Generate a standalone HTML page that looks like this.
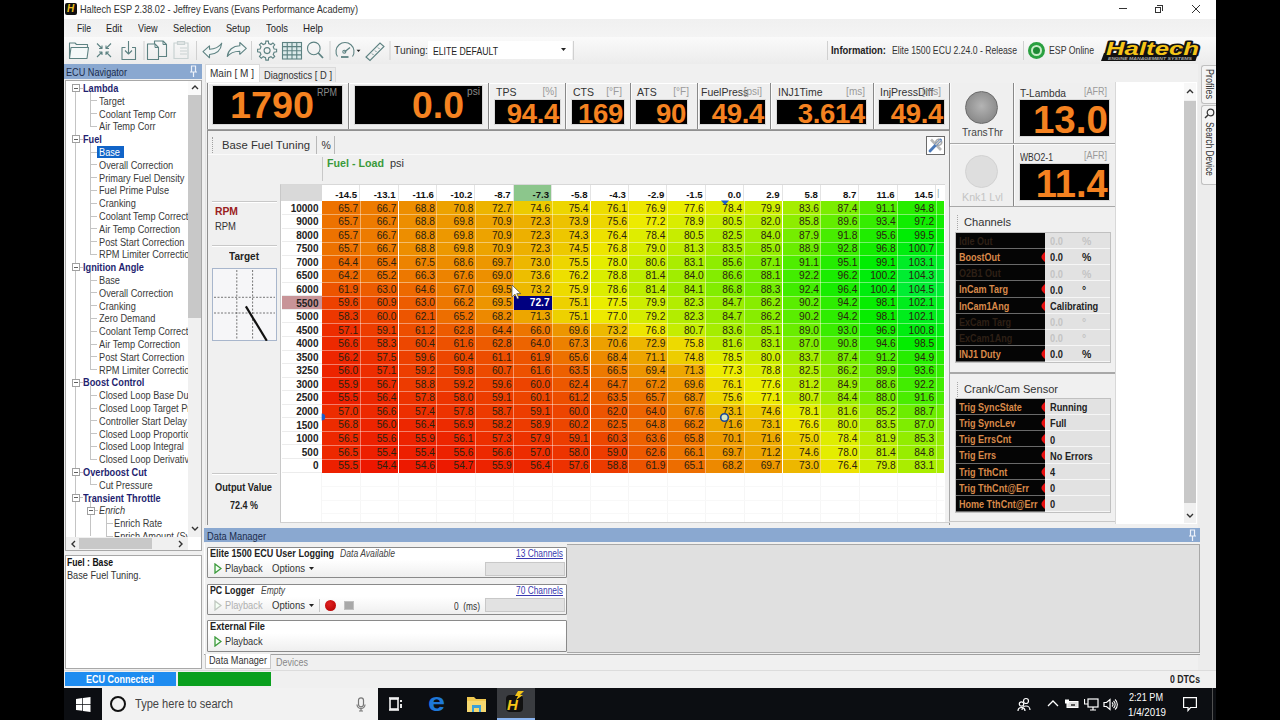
<!DOCTYPE html><html><head><meta charset="utf-8">
<style>
*{margin:0;padding:0;box-sizing:border-box}
html,body{width:1280px;height:720px;overflow:hidden;background:#000;font-family:"Liberation Sans",sans-serif;color:#222}
.a{position:absolute}
.t{position:absolute;white-space:nowrap;line-height:1}
.sep{position:absolute;width:1px;background:#c8c8c8}
</style></head><body>
<!-- window -->
<div class="a" style="left:64px;top:0;width:1152px;height:688px;background:#f0f0f0"></div>
<!-- title bar -->
<div class="a" style="left:64px;top:0;width:1152px;height:19px;background:#fff"></div>
<div class="a" style="left:65px;top:3px;width:12px;height:12px;background:#111;border-radius:2px"></div>
<div class="t" style="left:67px;top:4px;font-size:10px;font-weight:bold;font-style:italic;color:#f0c020">H</div>
<div class="t" style="left: 80px; top: 4px; font-size: 11px; color: rgb(51, 51, 51); display: inline-block; white-space: nowrap; transform: scaleX(0.8338); transform-origin: left center;">Haltech ESP 2.38.02 - Jeffrey Evans (Evans Performance Academy)</div>
<div class="a" style="left:1119px;top:8px;width:8px;height:1px;background:#333"></div>
<div class="a" style="left:1155px;top:7px;width:6px;height:6px;border:1px solid #333"></div>
<div class="a" style="left:1157px;top:5px;width:6px;height:6px;border-top:1px solid #333;border-right:1px solid #333"></div>
<svg class="a" style="left:1192px;top:5px" width="8" height="8"><path d="M0 0L8 8M8 0L0 8" stroke="#333" stroke-width="1"></path></svg>
<!-- menu bar -->
<div class="a" style="left:64px;top:19px;width:1152px;height:18px;background:linear-gradient(#f0f0f0,#f4f4f4)"></div>
<div class="t" style="left: 77px; top: 23px; font-size: 11px; color: rgb(34, 34, 34); display: inline-block; white-space: nowrap; transform: scaleX(0.7894); transform-origin: left center;">File</div>
<div class="t" style="left: 106px; top: 23px; font-size: 11px; color: rgb(34, 34, 34); display: inline-block; white-space: nowrap; transform: scaleX(0.8435); transform-origin: left center;">Edit</div>
<div class="t" style="left: 138px; top: 23px; font-size: 11px; color: rgb(34, 34, 34); display: inline-block; white-space: nowrap; transform: scaleX(0.8243); transform-origin: left center;">View</div>
<div class="t" style="left: 173px; top: 23px; font-size: 11px; color: rgb(34, 34, 34); display: inline-block; white-space: nowrap; transform: scaleX(0.8395); transform-origin: left center;">Selection</div>
<div class="t" style="left: 226px; top: 23px; font-size: 11px; color: rgb(34, 34, 34); display: inline-block; white-space: nowrap; transform: scaleX(0.8348); transform-origin: left center;">Setup</div>
<div class="t" style="left: 266px; top: 23px; font-size: 11px; color: rgb(34, 34, 34); display: inline-block; white-space: nowrap; transform: scaleX(0.8564); transform-origin: left center;">Tools</div>
<div class="t" style="left: 303px; top: 23px; font-size: 11px; color: rgb(34, 34, 34); display: inline-block; white-space: nowrap; transform: scaleX(0.884); transform-origin: left center;">Help</div>
<!-- toolbar -->
<div class="a" style="left:64px;top:37px;width:1152px;height:27px;background:linear-gradient(#fafafa,#ececec)"></div>
<svg class="a" style="left:64px;top:37px" width="520" height="27" viewBox="64 37 520 27">
<g fill="none" stroke="#5d8282" stroke-width="1.1" stroke-linejoin="round">
<path d="M69.5 58.5V43h5.5l1.5 1.5H87.5V47.5"></path>
<path d="M69.5 58.5L71 47.5H88.5L87 58.5Z" fill="#f4f8f8"></path>
<path d="M97 43.5L102 48.5M102 45.5V48.5H99M111 43.5L106 48.5M106 45.5V48.5H109M97 57L102 52M102 55V52H99M111 57L106 52M106 55V52H109"></path>
<path d="M125.5 47.5H122V59.5H135.5V47.5H132M128.5 41V53.5M125 50.5L128.5 54L132 50.5"></path>
<path d="M154.5 44V41H163L166.5 44.5V56.5H158.5"></path>
<path d="M147.5 59.5V44H155L158.5 47.5V59.5Z"></path>
<path d="M155 44V47.5H158.5M163 41V44.5H166.5" stroke-width="1"></path>
</g>
<g fill="none" stroke="#c9d2d2" stroke-width="1.2">
<path d="M174 58.5V43H188V58.5ZM177.5 41.5H184.5V44.5H177.5ZM180 48H187M180 51H187M180 54H187"></path>
</g>
<g fill="#f2f6f6" stroke="#5d8282" stroke-width="1.1" stroke-linejoin="round">
<path d="M203 51.7L209.5 45.8V49.2C215 49 219 47 221.7 43.2C221 50 216.5 54 209.5 54.5V57.8Z"></path>
<path d="M246.3 48.3L239.8 42.5V45.8C233 46 228 50 227.3 56.5C230 53 234 51.3 239.8 51.2V54.3Z"></path>
</g>
<g fill="none" stroke="#5d8282" stroke-width="1.1">
<path d="M274.13 49.03 L276.61 49.32 L276.61 51.88 L274.13 52.17 L273.18 54.46 L274.73 56.42 L272.92 58.23 L270.96 56.68 L268.67 57.63 L268.38 60.11 L265.82 60.11 L265.53 57.63 L263.24 56.68 L261.28 58.23 L259.47 56.42 L261.02 54.46 L260.07 52.17 L257.59 51.88 L257.59 49.32 L260.07 49.03 L261.02 46.74 L259.47 44.78 L261.28 42.97 L263.24 44.52 L265.53 43.57 L265.82 41.09 L268.38 41.09 L268.67 43.57 L270.96 44.52 L272.92 42.97 L274.73 44.78 L273.18 46.74Z"></path>
<circle cx="267.1" cy="50.6" r="3"></circle>
<rect x="282.5" y="42.5" width="19" height="16.5" fill="#dceaea"></rect>
<path d="M287.25 42.5V59M292 42.5V59M296.75 42.5V59M282.5 46.6H301.5M282.5 50.75H301.5M282.5 54.9H301.5"></path>
<circle cx="313.8" cy="48.4" r="6.3"></circle>
<path d="M318.3 53L323 58" stroke-width="1.8"></path>
<path d="M337.5 56.5A9 9 0 1 1 352.5 56.5"></path>
<path d="M344.5 52L350 47.5" stroke-width="1.3"></path>
<circle cx="344.3" cy="51.8" r="1.5"></circle>
<path d="M341 57H348.5" stroke-width="1.8"></path>
<path d="M366 57L370 60.5L384 46.5L380 43Z"></path>
<path d="M372 53.5L373.5 55M375 50.5L376.5 52M378 47.5L379.5 49" stroke-width="0.9"></path>
</g>
<path d="M356.5 49.8h4l-2 2.2z" fill="#222"></path>
<g fill="#d0d0d0"><rect x="143.5" y="41" width="1" height="19"></rect><rect x="196" y="41" width="1" height="19"></rect><rect x="251" y="41" width="1" height="19"></rect><rect x="329.5" y="41" width="1" height="19"></rect><rect x="389.5" y="41" width="1" height="19"></rect><rect x="573" y="41" width="1" height="19"></rect></g>
</svg>
<div class="t" style="left: 394px; top: 45px; font-size: 11px; color: rgb(51, 51, 51); display: inline-block; white-space: nowrap; transform: scaleX(0.9367); transform-origin: left center;">Tuning:</div>
<div class="a" style="left:428px;top:41px;width:144px;height:18px;background:#fff"></div>
<div class="t" style="left: 433px; top: 46.5px; font-size: 10px; color: rgb(34, 34, 34); display: inline-block; white-space: nowrap; transform: scaleX(0.8685); transform-origin: left center;">ELITE DEFAULT</div>
<svg class="a" style="left:561px;top:48px" width="6" height="4"><path d="M0 0h5l-2.5 3z" fill="#222"></path></svg>
<div class="a" style="left:827px;top:41px;width:1px;height:19px;background:#d0d0d0"></div>
<div class="t" style="left: 831px; top: 45px; font-size: 11px; font-weight: bold; color: rgb(34, 34, 34); display: inline-block; white-space: nowrap; transform: scaleX(0.8571); transform-origin: left center;">Information:</div>
<div class="t" style="left: 892px; top: 45px; font-size: 11px; color: rgb(51, 51, 51); display: inline-block; white-space: nowrap; transform: scaleX(0.7862); transform-origin: left center;">Elite 1500 ECU 2.24.0 - Release</div>
<div class="a" style="left:1023px;top:41px;width:1px;height:19px;background:#d0d0d0"></div>
<div class="a" style="left:1028px;top:41.5px;width:17px;height:17px;border-radius:50%;background:#2aa040"></div>
<div class="a" style="left:1031px;top:44.5px;width:11px;height:11px;border-radius:50%;background:#1f8a35;border:2px solid #c8ecc8"></div>
<div class="t" style="left: 1049px; top: 45px; font-size: 11px; color: rgb(51, 51, 51); display: inline-block; white-space: nowrap; transform: scaleX(0.794); transform-origin: left center;">ESP Online</div>
<svg class="a" style="left:1099px;top:39px" width="106" height="24" viewBox="0 0 106 24">
<path d="M5 14H99L96.5 22H2Z" fill="#111"></path>
<text x="7" y="16.3" font-family="Liberation Sans" font-weight="bold" font-style="italic" font-size="17.5" fill="#f5c518" stroke="#111" stroke-width="3.2" stroke-linejoin="round" paint-order="stroke" textLength="93" lengthAdjust="spacingAndGlyphs">Haltech</text>
<text x="9" y="20.8" font-family="Liberation Sans" font-weight="bold" font-style="italic" font-size="4.2" fill="#aaa" textLength="84" lengthAdjust="spacingAndGlyphs">ENGINE MANAGEMENT SYSTEMS</text>
</svg>
<!--TOOLBAR-->
<div class="a" style="left:64px;top:64px;width:138px;height:15px;background:#8aa8d0"></div>
<div class="t" style="left: 66px; top: 67px; font-size: 11px; color: rgb(28, 44, 76); display: inline-block; white-space: nowrap; transform: scaleX(0.8315); transform-origin: left center;">ECU Navigator</div>
<svg class="a" style="left:189px;top:65px" width="9" height="13"><path d="M2.5 1H6.5V7H2.5Z M1 7H8 M4.5 7V12" fill="none" stroke="#eef2fa" stroke-width="1.2"></path></svg>
<div class="a" style="left:65px;top:80px;width:137px;height:471px;background:#fff;border:1px solid #a8a8a8"></div>
<div class="a" style="left:66px;top:81px;width:122px;height:456px;overflow:hidden">
<div class="a" style="left:9px;top:10.6px;width:1px;height:445.4px;background:#c4c4c4"></div>
<div class="a" style="left:24px;top:10.6px;width:1px;height:34.4px;background:#c4c4c4"></div>
<div class="a" style="left:24px;top:61.8px;width:1px;height:111.2px;background:#c4c4c4"></div>
<div class="a" style="left:24px;top:189.8px;width:1px;height:98.4px;background:#c4c4c4"></div>
<div class="a" style="left:24px;top:305.0px;width:1px;height:72.8px;background:#c4c4c4"></div>
<div class="a" style="left:24px;top:394.6px;width:1px;height:8.8px;background:#c4c4c4"></div>
<div class="a" style="left:24px;top:420.2px;width:1px;height:34.4px;background:#c4c4c4"></div>
<div class="a" style="left:40px;top:433.0px;width:1px;height:35.6px;background:#c4c4c4"></div>
<div class="t" style="left:17.4px;top:3.0px;font-size:10px;color:#1f1f70;font-weight:bold;transform:scaleX(0.92);transform-origin:left center">Lambda</div>
<div class="a" style="left:6px;top:3.1px;width:8px;height:8px;border:1px solid #a0a0a0;background:#fff"></div><div class="a" style="left:8px;top:6.6px;width:4px;height:1px;background:#606060"></div>
<div class="a" style="left:14px;top:6.6px;width:3px;height:1px;background:#c4c4c4"></div>
<div class="a" style="left:24px;top:19.4px;width:7px;height:1px;background:#c4c4c4"></div>
<div class="t" style="left:32.7px;top:15.8px;font-size:10px;color:#3a3a3a;transform:scaleX(0.92);transform-origin:left center">Target</div>
<div class="a" style="left:24px;top:32.2px;width:7px;height:1px;background:#c4c4c4"></div>
<div class="t" style="left:32.7px;top:28.6px;font-size:10px;color:#3a3a3a;transform:scaleX(0.92);transform-origin:left center">Coolant Temp Corr</div>
<div class="a" style="left:24px;top:45.0px;width:7px;height:1px;background:#c4c4c4"></div>
<div class="t" style="left:32.7px;top:41.4px;font-size:10px;color:#3a3a3a;transform:scaleX(0.92);transform-origin:left center">Air Temp Corr</div>
<div class="t" style="left:17.4px;top:54.2px;font-size:10px;color:#1f1f70;font-weight:bold;transform:scaleX(0.92);transform-origin:left center">Fuel</div>
<div class="a" style="left:6px;top:54.3px;width:8px;height:8px;border:1px solid #a0a0a0;background:#fff"></div><div class="a" style="left:8px;top:57.8px;width:4px;height:1px;background:#606060"></div>
<div class="a" style="left:14px;top:57.8px;width:3px;height:1px;background:#c4c4c4"></div>
<div class="a" style="left:24px;top:70.6px;width:7px;height:1px;background:#c4c4c4"></div>
<div class="a" style="left:30.6px;top:64.6px;width:27px;height:12px;background:#1164c8"></div>
<div class="t" style="left:32.7px;top:67.0px;font-size:10px;color:#fff;transform:scaleX(0.92);transform-origin:left center">Base</div>
<div class="a" style="left:24px;top:83.4px;width:7px;height:1px;background:#c4c4c4"></div>
<div class="t" style="left:32.7px;top:79.8px;font-size:10px;color:#3a3a3a;transform:scaleX(0.92);transform-origin:left center">Overall Correction</div>
<div class="a" style="left:24px;top:96.2px;width:7px;height:1px;background:#c4c4c4"></div>
<div class="t" style="left:32.7px;top:92.6px;font-size:10px;color:#3a3a3a;transform:scaleX(0.92);transform-origin:left center">Primary Fuel Density</div>
<div class="a" style="left:24px;top:109.0px;width:7px;height:1px;background:#c4c4c4"></div>
<div class="t" style="left:32.7px;top:105.4px;font-size:10px;color:#3a3a3a;transform:scaleX(0.92);transform-origin:left center">Fuel Prime Pulse</div>
<div class="a" style="left:24px;top:121.8px;width:7px;height:1px;background:#c4c4c4"></div>
<div class="t" style="left:32.7px;top:118.2px;font-size:10px;color:#3a3a3a;transform:scaleX(0.92);transform-origin:left center">Cranking</div>
<div class="a" style="left:24px;top:134.6px;width:7px;height:1px;background:#c4c4c4"></div>
<div class="t" style="left:32.7px;top:131.0px;font-size:10px;color:#3a3a3a;transform:scaleX(0.92);transform-origin:left center">Coolant Temp Correction</div>
<div class="a" style="left:24px;top:147.4px;width:7px;height:1px;background:#c4c4c4"></div>
<div class="t" style="left:32.7px;top:143.8px;font-size:10px;color:#3a3a3a;transform:scaleX(0.92);transform-origin:left center">Air Temp Correction</div>
<div class="a" style="left:24px;top:160.2px;width:7px;height:1px;background:#c4c4c4"></div>
<div class="t" style="left:32.7px;top:156.6px;font-size:10px;color:#3a3a3a;transform:scaleX(0.92);transform-origin:left center">Post Start Correction</div>
<div class="a" style="left:24px;top:173.0px;width:7px;height:1px;background:#c4c4c4"></div>
<div class="t" style="left:32.7px;top:169.4px;font-size:10px;color:#3a3a3a;transform:scaleX(0.92);transform-origin:left center">RPM Limiter Correction</div>
<div class="t" style="left:17.4px;top:182.2px;font-size:10px;color:#1f1f70;font-weight:bold;transform:scaleX(0.92);transform-origin:left center">Ignition Angle</div>
<div class="a" style="left:6px;top:182.3px;width:8px;height:8px;border:1px solid #a0a0a0;background:#fff"></div><div class="a" style="left:8px;top:185.8px;width:4px;height:1px;background:#606060"></div>
<div class="a" style="left:14px;top:185.8px;width:3px;height:1px;background:#c4c4c4"></div>
<div class="a" style="left:24px;top:198.6px;width:7px;height:1px;background:#c4c4c4"></div>
<div class="t" style="left:32.7px;top:195.0px;font-size:10px;color:#3a3a3a;transform:scaleX(0.92);transform-origin:left center">Base</div>
<div class="a" style="left:24px;top:211.4px;width:7px;height:1px;background:#c4c4c4"></div>
<div class="t" style="left:32.7px;top:207.8px;font-size:10px;color:#3a3a3a;transform:scaleX(0.92);transform-origin:left center">Overall Correction</div>
<div class="a" style="left:24px;top:224.2px;width:7px;height:1px;background:#c4c4c4"></div>
<div class="t" style="left:32.7px;top:220.6px;font-size:10px;color:#3a3a3a;transform:scaleX(0.92);transform-origin:left center">Cranking</div>
<div class="a" style="left:24px;top:237.0px;width:7px;height:1px;background:#c4c4c4"></div>
<div class="t" style="left:32.7px;top:233.4px;font-size:10px;color:#3a3a3a;transform:scaleX(0.92);transform-origin:left center">Zero Demand</div>
<div class="a" style="left:24px;top:249.8px;width:7px;height:1px;background:#c4c4c4"></div>
<div class="t" style="left:32.7px;top:246.2px;font-size:10px;color:#3a3a3a;transform:scaleX(0.92);transform-origin:left center">Coolant Temp Correction</div>
<div class="a" style="left:24px;top:262.6px;width:7px;height:1px;background:#c4c4c4"></div>
<div class="t" style="left:32.7px;top:259.0px;font-size:10px;color:#3a3a3a;transform:scaleX(0.92);transform-origin:left center">Air Temp Correction</div>
<div class="a" style="left:24px;top:275.4px;width:7px;height:1px;background:#c4c4c4"></div>
<div class="t" style="left:32.7px;top:271.8px;font-size:10px;color:#3a3a3a;transform:scaleX(0.92);transform-origin:left center">Post Start Correction</div>
<div class="a" style="left:24px;top:288.2px;width:7px;height:1px;background:#c4c4c4"></div>
<div class="t" style="left:32.7px;top:284.6px;font-size:10px;color:#3a3a3a;transform:scaleX(0.92);transform-origin:left center">RPM Limiter Correction</div>
<div class="t" style="left:17.4px;top:297.4px;font-size:10px;color:#1f1f70;font-weight:bold;transform:scaleX(0.92);transform-origin:left center">Boost Control</div>
<div class="a" style="left:6px;top:297.5px;width:8px;height:8px;border:1px solid #a0a0a0;background:#fff"></div><div class="a" style="left:8px;top:301.0px;width:4px;height:1px;background:#606060"></div>
<div class="a" style="left:14px;top:301.0px;width:3px;height:1px;background:#c4c4c4"></div>
<div class="a" style="left:24px;top:313.8px;width:7px;height:1px;background:#c4c4c4"></div>
<div class="t" style="left:32.7px;top:310.2px;font-size:10px;color:#3a3a3a;transform:scaleX(0.92);transform-origin:left center">Closed Loop Base Duty</div>
<div class="a" style="left:24px;top:326.6px;width:7px;height:1px;background:#c4c4c4"></div>
<div class="t" style="left:32.7px;top:323.0px;font-size:10px;color:#3a3a3a;transform:scaleX(0.92);transform-origin:left center">Closed Loop Target Pressure</div>
<div class="a" style="left:24px;top:339.4px;width:7px;height:1px;background:#c4c4c4"></div>
<div class="t" style="left:32.7px;top:335.8px;font-size:10px;color:#3a3a3a;transform:scaleX(0.92);transform-origin:left center">Controller Start Delay</div>
<div class="a" style="left:24px;top:352.2px;width:7px;height:1px;background:#c4c4c4"></div>
<div class="t" style="left:32.7px;top:348.6px;font-size:10px;color:#3a3a3a;transform:scaleX(0.92);transform-origin:left center">Closed Loop Proportional</div>
<div class="a" style="left:24px;top:365.0px;width:7px;height:1px;background:#c4c4c4"></div>
<div class="t" style="left:32.7px;top:361.4px;font-size:10px;color:#3a3a3a;transform:scaleX(0.92);transform-origin:left center">Closed Loop Integral</div>
<div class="a" style="left:24px;top:377.8px;width:7px;height:1px;background:#c4c4c4"></div>
<div class="t" style="left:32.7px;top:374.2px;font-size:10px;color:#3a3a3a;transform:scaleX(0.92);transform-origin:left center">Closed Loop Derivative</div>
<div class="t" style="left:17.4px;top:387.0px;font-size:10px;color:#1f1f70;font-weight:bold;transform:scaleX(0.92);transform-origin:left center">Overboost Cut</div>
<div class="a" style="left:6px;top:387.1px;width:8px;height:8px;border:1px solid #a0a0a0;background:#fff"></div><div class="a" style="left:8px;top:390.6px;width:4px;height:1px;background:#606060"></div>
<div class="a" style="left:14px;top:390.6px;width:3px;height:1px;background:#c4c4c4"></div>
<div class="a" style="left:24px;top:403.4px;width:7px;height:1px;background:#c4c4c4"></div>
<div class="t" style="left:32.7px;top:399.8px;font-size:10px;color:#3a3a3a;transform:scaleX(0.92);transform-origin:left center">Cut Pressure</div>
<div class="t" style="left:17.4px;top:412.6px;font-size:10px;color:#1f1f70;font-weight:bold;transform:scaleX(0.92);transform-origin:left center">Transient Throttle</div>
<div class="a" style="left:6px;top:412.7px;width:8px;height:8px;border:1px solid #a0a0a0;background:#fff"></div><div class="a" style="left:8px;top:416.2px;width:4px;height:1px;background:#606060"></div>
<div class="a" style="left:14px;top:416.2px;width:3px;height:1px;background:#c4c4c4"></div>
<div class="t" style="left:32.7px;top:425.4px;font-size:10px;color:#3a3a3a;font-style:italic;transform:scaleX(0.92);transform-origin:left center">Enrich</div>
<div class="a" style="left:21px;top:425.5px;width:8px;height:8px;border:1px solid #a0a0a0;background:#fff"></div><div class="a" style="left:23px;top:429.0px;width:4px;height:1px;background:#606060"></div>
<div class="a" style="left:29px;top:429.0px;width:3px;height:1px;background:#c4c4c4"></div>
<div class="a" style="left:40px;top:441.8px;width:7px;height:1px;background:#c4c4c4"></div>
<div class="t" style="left:48.0px;top:438.2px;font-size:10px;color:#3a3a3a;transform:scaleX(0.92);transform-origin:left center">Enrich Rate</div>
<div class="a" style="left:40px;top:454.6px;width:7px;height:1px;background:#c4c4c4"></div>
<div class="t" style="left:48.0px;top:451.0px;font-size:10px;color:#3a3a3a;transform:scaleX(0.92);transform-origin:left center">Enrich Amount (Sync)</div>
</div>
<div class="a" style="left:188px;top:81px;width:13px;height:456px;background:#f0f0f0"></div>
<div class="a" style="left:188px;top:81px;width:13px;height:14px;background:#fafafa"></div>
<svg class="a" style="left:191px;top:84px" width="8" height="6"><path d="M1 5L4 2L7 5" fill="none" stroke="#333" stroke-width="1.4"></path></svg>
<div class="a" style="left:188px;top:95px;width:13px;height:223px;background:#c8c8c8"></div>
<svg class="a" style="left:191px;top:526px" width="8" height="6"><path d="M1 1L4 4L7 1" fill="none" stroke="#333" stroke-width="1.4"></path></svg>
<div class="a" style="left:66px;top:537px;width:122px;height:13px;background:#f0f0f0"></div>
<div class="a" style="left:79px;top:538px;width:73px;height:11px;background:#c8c8c8"></div>
<svg class="a" style="left:70px;top:540px" width="6" height="8"><path d="M5 1L2 4L5 7" fill="none" stroke="#333" stroke-width="1.4"></path></svg>
<svg class="a" style="left:178px;top:540px" width="6" height="8"><path d="M1 1L4 4L1 7" fill="none" stroke="#333" stroke-width="1.4"></path></svg>
<div class="a" style="left:65px;top:555px;width:137px;height:114px;background:#fff;border:1px solid #a8a8a8"></div>
<div class="t" style="left: 67px; top: 558px; font-size: 10px; font-weight: bold; color: rgb(17, 17, 17); display: inline-block; white-space: nowrap; transform: scaleX(0.8621); transform-origin: left center;">Fuel : Base</div>
<div class="t" style="left: 67px; top: 570.5px; font-size: 10px; color: rgb(51, 51, 51); display: inline-block; white-space: nowrap; transform: scaleX(0.918); transform-origin: left center;">Base Fuel Tuning.</div>

<div class="a" style="left:205px;top:64px;width:55px;height:19px;background:#fff;border:1px solid #dadada;border-bottom:none"></div>
<div class="t" style="left: 210px; top: 68px; font-size: 10.5px; color: rgb(51, 51, 51); display: inline-block; white-space: nowrap; transform: scaleX(0.9546); transform-origin: left center;">Main [ M ]</div>
<div class="a" style="left:260px;top:67px;width:76px;height:15px;background:#ebebeb;border:1px solid #dadada;border-bottom:none;border-left:none"></div>
<div class="t" style="left: 264px; top: 69.5px; font-size: 10.5px; color: rgb(51, 51, 51); display: inline-block; white-space: nowrap; transform: scaleX(0.8894); transform-origin: left center;">Diagnostics [ D ]</div>
<div class="a" style="left:205px;top:82px;width:995px;height:443px;background:#f0f0f0;border-left:1px solid #e4e4e4"></div>
<div class="a" style="left:207px;top:83px;width:742px;height:47px;background:#efefef;border-top:1px solid #fff"></div>
<div class="a" style="left:207px;top:83px;width:1px;height:47px;background:#888888"></div><div class="a" style="left:208px;top:83px;width:1px;height:47px;background:#fbfbfb"></div>
<div class="a" style="left:348px;top:83px;width:1px;height:47px;background:#888888"></div><div class="a" style="left:349px;top:83px;width:1px;height:47px;background:#fbfbfb"></div>
<div class="a" style="left:488px;top:83px;width:1px;height:47px;background:#888888"></div><div class="a" style="left:489px;top:83px;width:1px;height:47px;background:#fbfbfb"></div>
<div class="a" style="left:565px;top:83px;width:1px;height:47px;background:#888888"></div><div class="a" style="left:566px;top:83px;width:1px;height:47px;background:#fbfbfb"></div>
<div class="a" style="left:630px;top:83px;width:1px;height:47px;background:#888888"></div><div class="a" style="left:631px;top:83px;width:1px;height:47px;background:#fbfbfb"></div>
<div class="a" style="left:697px;top:83px;width:1px;height:47px;background:#888888"></div><div class="a" style="left:698px;top:83px;width:1px;height:47px;background:#fbfbfb"></div>
<div class="a" style="left:770px;top:83px;width:1px;height:47px;background:#888888"></div><div class="a" style="left:771px;top:83px;width:1px;height:47px;background:#fbfbfb"></div>
<div class="a" style="left:873px;top:83px;width:1px;height:47px;background:#888888"></div><div class="a" style="left:874px;top:83px;width:1px;height:47px;background:#fbfbfb"></div>
<div class="a" style="left:949px;top:83px;width:1px;height:47px;background:#888888"></div><div class="a" style="left:950px;top:83px;width:1px;height:47px;background:#fbfbfb"></div>
<div class="a" style="left:207px;top:129px;width:743px;height:1px;background:#a0a0a0"></div>
<div class="a" style="left:212px;top:85px;width:131px;height:40px;background:#d8d8d8"></div>
<div class="a" style="left:213px;top:86px;width:129px;height:38px;background:#000"></div>
<div class="t" style="left: 230px; top: 87px; font-size: 37.7px; font-weight: bold; color: rgb(245, 130, 32); display: inline-block; white-space: nowrap; transform: scaleX(1.0019); transform-origin: left center;">1790</div>
<div class="t" style="left: 317px; top: 87px; font-size: 10.5px; color: rgb(138, 138, 138); display: inline-block; white-space: nowrap; transform: scaleX(0.8568); transform-origin: left center;">RPM</div>
<div class="a" style="left:354px;top:85px;width:129px;height:40px;background:#d8d8d8"></div>
<div class="a" style="left:355px;top:86px;width:127px;height:38px;background:#000"></div>
<div class="t" style="left: 412px; top: 87px; font-size: 37.7px; font-weight: bold; color: rgb(245, 130, 32); display: inline-block; white-space: nowrap; transform: scaleX(0.9922); transform-origin: left center;">0.0</div>
<div class="t" style="left: 466.5px; top: 86px; font-size: 10.5px; color: rgb(138, 138, 138); display: inline-block; white-space: nowrap; transform: scaleX(0.9674); transform-origin: left center;">psi</div>
<div class="a" style="left:494px;top:99px;width:67px;height:26px;background:#d8d8d8"></div>
<div class="a" style="left:495px;top:100px;width:65px;height:24px;background:#000"></div>
<div class="t" style="left:496px;top:87px;font-size:10.5px;color:#333">TPS</div>
<div class="t" style="right:723px;top:87px;font-size:10px;color:#9a9a9a">[%]</div>
<div class="t" style="right:721px;top:99.5px;font-size:27.5px;font-weight:bold;color:#f58220;letter-spacing:-0.3px">94.4</div>
<div class="a" style="left:571px;top:99px;width:54px;height:26px;background:#d8d8d8"></div>
<div class="a" style="left:572px;top:100px;width:52px;height:24px;background:#000"></div>
<div class="t" style="left:573px;top:87px;font-size:10.5px;color:#333">CTS</div>
<div class="t" style="right:658px;top:87px;font-size:10px;color:#9a9a9a">[°F]</div>
<div class="t" style="right:657px;top:99.5px;font-size:27.5px;font-weight:bold;color:#f58220;letter-spacing:-0.3px">169</div>
<div class="a" style="left:635px;top:99px;width:53px;height:26px;background:#d8d8d8"></div>
<div class="a" style="left:636px;top:100px;width:51px;height:24px;background:#000"></div>
<div class="t" style="left:637px;top:87px;font-size:10.5px;color:#333">ATS</div>
<div class="t" style="right:591px;top:87px;font-size:10px;color:#9a9a9a">[°F]</div>
<div class="t" style="right:594px;top:99.5px;font-size:27.5px;font-weight:bold;color:#f58220;letter-spacing:-0.3px">90</div>
<div class="a" style="left:699px;top:99px;width:67px;height:26px;background:#d8d8d8"></div>
<div class="a" style="left:700px;top:100px;width:65px;height:24px;background:#000"></div>
<div class="t" style="left:701px;top:87px;font-size:10.5px;color:#333">FuelPress</div>
<div class="t" style="right:518px;top:87px;font-size:10px;color:#9a9a9a">[psi]</div>
<div class="t" style="right:516px;top:99.5px;font-size:27.5px;font-weight:bold;color:#f58220;letter-spacing:-0.3px">49.4</div>
<div class="a" style="left:776px;top:99px;width:91px;height:26px;background:#d8d8d8"></div>
<div class="a" style="left:777px;top:100px;width:89px;height:24px;background:#000"></div>
<div class="t" style="left:778px;top:87px;font-size:10.5px;color:#333">INJ1Time</div>
<div class="t" style="right:415px;top:87px;font-size:10px;color:#9a9a9a">[ms]</div>
<div class="t" style="right:415px;top:99.5px;font-size:27.5px;font-weight:bold;color:#f58220;letter-spacing:-0.3px">3.614</div>
<div class="a" style="left:878px;top:99px;width:67px;height:26px;background:#d8d8d8"></div>
<div class="a" style="left:879px;top:100px;width:65px;height:24px;background:#000"></div>
<div class="t" style="left:880px;top:87px;font-size:10.5px;color:#333">InjPressDiff</div>
<div class="t" style="right:339px;top:87px;font-size:10px;color:#9a9a9a">[ms]</div>
<div class="t" style="right:337px;top:99.5px;font-size:27.5px;font-weight:bold;color:#f58220;letter-spacing:-0.3px">49.4</div>
<div class="a" style="left:950px;top:83px;width:165px;height:123px;background:#efefef"></div>
<div class="a" style="left:949px;top:83px;width:1px;height:123px;background:#888888"></div><div class="a" style="left:950px;top:83px;width:1px;height:123px;background:#fbfbfb"></div>
<div class="a" style="left:1013px;top:83px;width:1px;height:123px;background:#888888"></div><div class="a" style="left:1014px;top:83px;width:1px;height:123px;background:#fbfbfb"></div>
<div class="a" style="left:1115px;top:83px;width:1px;height:123px;background:#888888"></div><div class="a" style="left:1116px;top:83px;width:1px;height:123px;background:#fbfbfb"></div>
<div class="a" style="left:950px;top:143px;width:165px;height:1px;background:#a8a8a8"></div><div class="a" style="left:950px;top:144px;width:165px;height:1px;background:#fbfbfb"></div>
<div class="a" style="left:950px;top:206px;width:165px;height:1px;background:#a8a8a8"></div><div class="a" style="left:950px;top:207px;width:165px;height:1px;background:#fbfbfb"></div>
<div class="a" style="left:965.3px;top:90.5px;width:33px;height:33px;border-radius:50%;background:radial-gradient(circle at 50% 45%,#b4b4b4,#8c8c8c 70%,#7a7a7a);border:1px solid #6a6a6a"></div>
<div class="t" style="left: 962px; top: 126.5px; font-size: 10.5px; color: rgb(68, 68, 68); display: inline-block; white-space: nowrap; transform: scaleX(0.9715); transform-origin: left center;">TransThr</div>
<div class="a" style="left:965.3px;top:155px;width:33px;height:33px;border-radius:50%;background:#dedede;border:1px solid #d2d2d2"></div>
<div class="t" style="left: 962px; top: 191.5px; font-size: 10.5px; color: rgb(196, 196, 196); display: inline-block; white-space: nowrap; transform: scaleX(1.0178); transform-origin: left center;">Knk1 Lvl</div>
<div class="a" style="left:1019px;top:99px;width:91px;height:38px;background:#d8d8d8"></div>
<div class="a" style="left:1020px;top:100px;width:89px;height:36px;background:#000"></div>
<div class="t" style="left: 1020px; top: 87.5px; font-size: 10.5px; color: rgb(51, 51, 51); display: inline-block; white-space: nowrap; transform: scaleX(0.9729); transform-origin: left center;">T-Lambda</div>
<div class="t" style="left: 1084px; top: 87px; font-size: 10px; color: rgb(154, 154, 154); display: inline-block; white-space: nowrap; transform: scaleX(0.8998); transform-origin: left center;">[AFR]</div>
<div class="t" style="right: 172px; top: 99.5px; font-size: 39px; font-weight: bold; color: rgb(245, 130, 32); transform-origin: right center; display: inline-block; white-space: nowrap; transform: scaleX(0.9881);">13.0</div>
<div class="a" style="left:1019px;top:163px;width:91px;height:38px;background:#d8d8d8"></div>
<div class="a" style="left:1020px;top:164px;width:89px;height:36px;background:#000"></div>
<div class="t" style="left: 1020px; top: 151.5px; font-size: 10.5px; color: rgb(51, 51, 51); display: inline-block; white-space: nowrap; transform: scaleX(0.8196); transform-origin: left center;">WBO2-1</div>
<div class="t" style="left: 1084px; top: 151px; font-size: 10px; color: rgb(154, 154, 154); display: inline-block; white-space: nowrap; transform: scaleX(0.8998); transform-origin: left center;">[AFR]</div>
<div class="t" style="right: 172px; top: 163.5px; font-size: 39px; font-weight: bold; color: rgb(245, 130, 32); transform-origin: right center; display: inline-block; white-space: nowrap; transform: scaleX(0.9761);">11.4</div>

<div class="a" style="left:207px;top:130px;width:743px;height:395px;background:#f0f0f0;border:1px solid #909090;border-bottom:none"></div>
<div class="a" style="left:208px;top:154px;width:740px;height:1px;background:#fafafa"></div>
<div class="a" style="left:212px;top:137px;width:1px;height:16px;border-left:1px dotted #a0a0a0"></div>
<div class="t" style="left: 222px; top: 140px; font-size: 11px; color: rgb(51, 51, 51); display: inline-block; white-space: nowrap; transform: scaleX(1.0277); transform-origin: left center;">Base Fuel Tuning</div>
<div class="a" style="left:316px;top:136px;width:1px;height:18px;background:#b8b8b8"></div>
<div class="t" style="left:321.5px;top:140px;font-size:10.5px;color:#333">%</div>
<div class="a" style="left:334px;top:136px;width:1px;height:18px;background:#b8b8b8"></div>
<div class="a" style="left:926px;top:135.5px;width:19px;height:19px;background:#fff;border:1px solid #6a6a6a"></div>
<svg class="a" style="left:927px;top:136.5px" width="17" height="17"><path d="M4 2.5L14 13" stroke="#b8b8b8" stroke-width="2.6"></path><path d="M11 2L14 5M13 2.5A3 3 0 1 0 14.5 4" fill="none" stroke="#aaa" stroke-width="1.6"></path><path d="M13.5 3L3 14" stroke="#4a78b8" stroke-width="2.8" stroke-linecap="round"></path><path d="M13.5 3L8.5 8" stroke="#c0c0c0" stroke-width="2"></path></svg>
<div class="a" style="left:212px;top:201px;width:65px;height:1px;background:#c8c8c8"></div><div class="a" style="left:212px;top:202px;width:65px;height:1px;background:#fff"></div>
<div class="t" style="left: 214.5px; top: 205.5px; font-size: 10.5px; font-weight: bold; color: rgb(154, 32, 32); display: inline-block; white-space: nowrap; transform: scaleX(0.9853); transform-origin: left center;">RPM</div>
<div class="t" style="left: 214.5px; top: 220.5px; font-size: 10.5px; color: rgb(51, 51, 51); display: inline-block; white-space: nowrap; transform: scaleX(0.8996); transform-origin: left center;">RPM</div>
<div class="a" style="left:212px;top:245px;width:65px;height:1px;background:#c8c8c8"></div><div class="a" style="left:212px;top:246px;width:65px;height:1px;background:#fff"></div>
<div class="t" style="left: 229px; top: 251px; font-size: 10.5px; font-weight: bold; color: rgb(34, 34, 34); display: inline-block; white-space: nowrap; transform: scaleX(0.9581); transform-origin: left center;">Target</div>
<div class="a" style="left:212px;top:268px;width:65px;height:73px;background:#f6f6f8;border:1.5px solid #a8b6cc"></div>
<svg class="a" style="left:212px;top:268px" width="65" height="73"><path d="M24.8 2V71M40.6 2V71M2 29.3H63M2 45H63" stroke="#555" stroke-width="0.8" stroke-dasharray="2 1.5"></path><path d="M33.9 38.4L54.8 72.8" stroke="#111" stroke-width="2.2"></path></svg>
<div class="a" style="left:212px;top:473px;width:65px;height:1px;background:#c8c8c8"></div><div class="a" style="left:212px;top:474px;width:65px;height:1px;background:#fff"></div>
<div class="t" style="left: 215px; top: 482px; font-size: 10.5px; font-weight: bold; color: rgb(34, 34, 34); display: inline-block; white-space: nowrap; transform: scaleX(0.8801); transform-origin: left center;">Output Value</div>
<div class="t" style="left: 230px; top: 500px; font-size: 10.5px; font-weight: bold; color: rgb(34, 34, 34); display: inline-block; white-space: nowrap; transform: scaleX(0.8562); transform-origin: left center;">72.4 %</div>
<div class="a" style="left:322px;top:157px;width:1px;height:24px;background:#c8c8c8"></div>
<div class="t" style="left: 326.5px; top: 158px; font-size: 11px; font-weight: bold; color: rgb(58, 154, 58); display: inline-block; white-space: nowrap; transform: scaleX(0.9715); transform-origin: left center;">Fuel - Load</div>
<div class="t" style="left: 390px; top: 158px; font-size: 11px; color: rgb(51, 51, 51); display: inline-block; white-space: nowrap; transform: scaleX(0.9956); transform-origin: left center;">psi</div>
<div class="a" style="left:280px;top:184px;width:665px;height:338px;background:#fff;border-left:1px solid #c8c8c8;border-top:1px solid #d8d8d8"></div>
<div class="a" style="left:281px;top:185px;width:40.7px;height:16.4px;background:#d9d9d9"></div>
<div class="a" style="left:359.10px;top:185px;width:1px;height:16.4px;background:#e4e4e4"></div>
<div class="t" style="right:922.90px;top:189.5px;font-size:9.6px;font-weight:bold;color:#111">-14.5</div>
<div class="a" style="left:397.50px;top:185px;width:1px;height:16.4px;background:#e4e4e4"></div>
<div class="t" style="right:884.50px;top:189.5px;font-size:9.6px;font-weight:bold;color:#111">-13.1</div>
<div class="a" style="left:435.90px;top:185px;width:1px;height:16.4px;background:#e4e4e4"></div>
<div class="t" style="right:846.10px;top:189.5px;font-size:9.6px;font-weight:bold;color:#111">-11.6</div>
<div class="a" style="left:474.30px;top:185px;width:1px;height:16.4px;background:#e4e4e4"></div>
<div class="t" style="right:807.70px;top:189.5px;font-size:9.6px;font-weight:bold;color:#111">-10.2</div>
<div class="a" style="left:512.70px;top:185px;width:1px;height:16.4px;background:#e4e4e4"></div>
<div class="t" style="right:769.30px;top:189.5px;font-size:9.6px;font-weight:bold;color:#111">-8.7</div>
<div class="a" style="left:513.70px;top:185px;width:38.40px;height:16.4px;background:#8cc68c"></div>
<div class="a" style="left:551.10px;top:185px;width:1px;height:16.4px;background:#e4e4e4"></div>
<div class="t" style="right:730.90px;top:189.5px;font-size:9.6px;font-weight:bold;color:#111">-7.3</div>
<div class="a" style="left:589.50px;top:185px;width:1px;height:16.4px;background:#e4e4e4"></div>
<div class="t" style="right:692.50px;top:189.5px;font-size:9.6px;font-weight:bold;color:#111">-5.8</div>
<div class="a" style="left:627.90px;top:185px;width:1px;height:16.4px;background:#e4e4e4"></div>
<div class="t" style="right:654.10px;top:189.5px;font-size:9.6px;font-weight:bold;color:#111">-4.3</div>
<div class="a" style="left:666.30px;top:185px;width:1px;height:16.4px;background:#e4e4e4"></div>
<div class="t" style="right:615.70px;top:189.5px;font-size:9.6px;font-weight:bold;color:#111">-2.9</div>
<div class="a" style="left:704.70px;top:185px;width:1px;height:16.4px;background:#e4e4e4"></div>
<div class="t" style="right:577.30px;top:189.5px;font-size:9.6px;font-weight:bold;color:#111">-1.5</div>
<div class="a" style="left:743.10px;top:185px;width:1px;height:16.4px;background:#e4e4e4"></div>
<div class="t" style="right:538.90px;top:189.5px;font-size:9.6px;font-weight:bold;color:#111">0.0</div>
<div class="a" style="left:781.50px;top:185px;width:1px;height:16.4px;background:#e4e4e4"></div>
<div class="t" style="right:500.50px;top:189.5px;font-size:9.6px;font-weight:bold;color:#111">2.9</div>
<div class="a" style="left:819.90px;top:185px;width:1px;height:16.4px;background:#e4e4e4"></div>
<div class="t" style="right:462.10px;top:189.5px;font-size:9.6px;font-weight:bold;color:#111">5.8</div>
<div class="a" style="left:858.30px;top:185px;width:1px;height:16.4px;background:#e4e4e4"></div>
<div class="t" style="right:423.70px;top:189.5px;font-size:9.6px;font-weight:bold;color:#111">8.7</div>
<div class="a" style="left:896.70px;top:185px;width:1px;height:16.4px;background:#e4e4e4"></div>
<div class="t" style="right:385.30px;top:189.5px;font-size:9.6px;font-weight:bold;color:#111">11.6</div>
<div class="a" style="left:935.10px;top:185px;width:1px;height:16.4px;background:#e4e4e4"></div>
<div class="t" style="right:346.90px;top:189.5px;font-size:9.6px;font-weight:bold;color:#111">14.5</div>
<div class="t" style="left:937px;top:189px;font-size:9px;color:#8aa">|</div>
<div class="a" style="left:282px;top:213.96px;width:39.7px;height:1px;background:#ececec"></div>
<div class="t" style="right:961.50px;top:203.60px;font-size:10px;font-weight:bold;color:#222">10000</div>
<div class="a" style="left:321.70px;top:201.40px;width:38.40px;height:13.56px;background:#ed7200"></div>
<div class="a" style="left:360.10px;top:201.40px;width:38.40px;height:13.56px;background:#ed7b00"></div>
<div class="a" style="left:398.50px;top:201.40px;width:38.40px;height:13.56px;background:#ed8e00"></div>
<div class="a" style="left:436.90px;top:201.40px;width:38.40px;height:13.56px;background:#eda200"></div>
<div class="a" style="left:475.30px;top:201.40px;width:38.40px;height:13.56px;background:#edb400"></div>
<div class="a" style="left:513.70px;top:201.40px;width:38.40px;height:13.56px;background:#edcb00"></div>
<div class="a" style="left:552.10px;top:201.40px;width:38.40px;height:13.56px;background:#edd500"></div>
<div class="a" style="left:590.50px;top:201.40px;width:38.40px;height:13.56px;background:#eddd00"></div>
<div class="a" style="left:628.90px;top:201.40px;width:38.40px;height:13.56px;background:#ede700"></div>
<div class="a" style="left:667.30px;top:201.40px;width:38.40px;height:13.56px;background:#e9ed00"></div>
<div class="a" style="left:705.70px;top:201.40px;width:38.40px;height:13.56px;background:#dfed00"></div>
<div class="a" style="left:744.10px;top:201.40px;width:38.40px;height:13.56px;background:#cded00"></div>
<div class="a" style="left:782.50px;top:201.40px;width:38.40px;height:13.56px;background:#a5ed00"></div>
<div class="a" style="left:820.90px;top:201.40px;width:38.40px;height:13.56px;background:#7bed00"></div>
<div class="a" style="left:859.30px;top:201.40px;width:38.40px;height:13.56px;background:#4fed00"></div>
<div class="a" style="left:897.70px;top:201.40px;width:38.40px;height:13.56px;background:#27ed00"></div>
<div class="a" style="left:936.10px;top:201.40px;width:7.90px;height:13.56px;background:#27ed00"></div>
<div class="a" style="left:282px;top:227.52px;width:39.7px;height:1px;background:#ececec"></div>
<div class="t" style="right:961.50px;top:217.16px;font-size:10px;font-weight:bold;color:#222">9000</div>
<div class="a" style="left:321.70px;top:214.96px;width:38.40px;height:13.56px;background:#ed7200"></div>
<div class="a" style="left:360.10px;top:214.96px;width:38.40px;height:13.56px;background:#ed7b00"></div>
<div class="a" style="left:398.50px;top:214.96px;width:38.40px;height:13.56px;background:#ed8e00"></div>
<div class="a" style="left:436.90px;top:214.96px;width:38.40px;height:13.56px;background:#ed9800"></div>
<div class="a" style="left:475.30px;top:214.96px;width:38.40px;height:13.56px;background:#eda300"></div>
<div class="a" style="left:513.70px;top:214.96px;width:38.40px;height:13.56px;background:#edb000"></div>
<div class="a" style="left:552.10px;top:214.96px;width:38.40px;height:13.56px;background:#edc200"></div>
<div class="a" style="left:590.50px;top:214.96px;width:38.40px;height:13.56px;background:#edd700"></div>
<div class="a" style="left:628.90px;top:214.96px;width:38.40px;height:13.56px;background:#edeb00"></div>
<div class="a" style="left:667.30px;top:214.96px;width:38.40px;height:13.56px;background:#d9ed00"></div>
<div class="a" style="left:705.70px;top:214.96px;width:38.40px;height:13.56px;background:#c7ed00"></div>
<div class="a" style="left:744.10px;top:214.96px;width:38.40px;height:13.56px;background:#b6ed00"></div>
<div class="a" style="left:782.50px;top:214.96px;width:38.40px;height:13.56px;background:#8ded00"></div>
<div class="a" style="left:820.90px;top:214.96px;width:38.40px;height:13.56px;background:#62ed00"></div>
<div class="a" style="left:859.30px;top:214.96px;width:38.40px;height:13.56px;background:#35ed00"></div>
<div class="a" style="left:897.70px;top:214.96px;width:38.40px;height:13.56px;background:#10ed00"></div>
<div class="a" style="left:936.10px;top:214.96px;width:7.90px;height:13.56px;background:#10ed00"></div>
<div class="a" style="left:282px;top:241.08px;width:39.7px;height:1px;background:#ececec"></div>
<div class="t" style="right:961.50px;top:230.72px;font-size:10px;font-weight:bold;color:#222">8000</div>
<div class="a" style="left:321.70px;top:228.52px;width:38.40px;height:13.56px;background:#ed7200"></div>
<div class="a" style="left:360.10px;top:228.52px;width:38.40px;height:13.56px;background:#ed7b00"></div>
<div class="a" style="left:398.50px;top:228.52px;width:38.40px;height:13.56px;background:#ed8e00"></div>
<div class="a" style="left:436.90px;top:228.52px;width:38.40px;height:13.56px;background:#ed9800"></div>
<div class="a" style="left:475.30px;top:228.52px;width:38.40px;height:13.56px;background:#eda300"></div>
<div class="a" style="left:513.70px;top:228.52px;width:38.40px;height:13.56px;background:#edb000"></div>
<div class="a" style="left:552.10px;top:228.52px;width:38.40px;height:13.56px;background:#edc700"></div>
<div class="a" style="left:590.50px;top:228.52px;width:38.40px;height:13.56px;background:#ede100"></div>
<div class="a" style="left:628.90px;top:228.52px;width:38.40px;height:13.56px;background:#dfed00"></div>
<div class="a" style="left:667.30px;top:228.52px;width:38.40px;height:13.56px;background:#c7ed00"></div>
<div class="a" style="left:705.70px;top:228.52px;width:38.40px;height:13.56px;background:#b1ed00"></div>
<div class="a" style="left:744.10px;top:228.52px;width:38.40px;height:13.56px;background:#a1ed00"></div>
<div class="a" style="left:782.50px;top:228.52px;width:38.40px;height:13.56px;background:#75ed00"></div>
<div class="a" style="left:820.90px;top:228.52px;width:38.40px;height:13.56px;background:#47ed00"></div>
<div class="a" style="left:859.30px;top:228.52px;width:38.40px;height:13.56px;background:#1fed00"></div>
<div class="a" style="left:897.70px;top:228.52px;width:38.40px;height:13.56px;background:#00ed04"></div>
<div class="a" style="left:936.10px;top:228.52px;width:7.90px;height:13.56px;background:#00ed04"></div>
<div class="a" style="left:282px;top:254.64px;width:39.7px;height:1px;background:#ececec"></div>
<div class="t" style="right:961.50px;top:244.28px;font-size:10px;font-weight:bold;color:#222">7500</div>
<div class="a" style="left:321.70px;top:242.08px;width:38.40px;height:13.56px;background:#ed7200"></div>
<div class="a" style="left:360.10px;top:242.08px;width:38.40px;height:13.56px;background:#ed7b00"></div>
<div class="a" style="left:398.50px;top:242.08px;width:38.40px;height:13.56px;background:#ed8e00"></div>
<div class="a" style="left:436.90px;top:242.08px;width:38.40px;height:13.56px;background:#ed9800"></div>
<div class="a" style="left:475.30px;top:242.08px;width:38.40px;height:13.56px;background:#eda300"></div>
<div class="a" style="left:513.70px;top:242.08px;width:38.40px;height:13.56px;background:#edb000"></div>
<div class="a" style="left:552.10px;top:242.08px;width:38.40px;height:13.56px;background:#edc900"></div>
<div class="a" style="left:590.50px;top:242.08px;width:38.40px;height:13.56px;background:#ede600"></div>
<div class="a" style="left:628.90px;top:242.08px;width:38.40px;height:13.56px;background:#d7ed00"></div>
<div class="a" style="left:667.30px;top:242.08px;width:38.40px;height:13.56px;background:#beed00"></div>
<div class="a" style="left:705.70px;top:242.08px;width:38.40px;height:13.56px;background:#a6ed00"></div>
<div class="a" style="left:744.10px;top:242.08px;width:38.40px;height:13.56px;background:#96ed00"></div>
<div class="a" style="left:782.50px;top:242.08px;width:38.40px;height:13.56px;background:#6aed00"></div>
<div class="a" style="left:820.90px;top:242.08px;width:38.40px;height:13.56px;background:#3bed00"></div>
<div class="a" style="left:859.30px;top:242.08px;width:38.40px;height:13.56px;background:#13ed00"></div>
<div class="a" style="left:897.70px;top:242.08px;width:38.40px;height:13.56px;background:#00ed0f"></div>
<div class="a" style="left:936.10px;top:242.08px;width:7.90px;height:13.56px;background:#00ed0f"></div>
<div class="a" style="left:282px;top:268.20px;width:39.7px;height:1px;background:#ececec"></div>
<div class="t" style="right:961.50px;top:257.84px;font-size:10px;font-weight:bold;color:#222">7000</div>
<div class="a" style="left:321.70px;top:255.64px;width:38.40px;height:13.56px;background:#ed6800"></div>
<div class="a" style="left:360.10px;top:255.64px;width:38.40px;height:13.56px;background:#ed7000"></div>
<div class="a" style="left:398.50px;top:255.64px;width:38.40px;height:13.56px;background:#ed8300"></div>
<div class="a" style="left:436.90px;top:255.64px;width:38.40px;height:13.56px;background:#ed8d00"></div>
<div class="a" style="left:475.30px;top:255.64px;width:38.40px;height:13.56px;background:#ed9700"></div>
<div class="a" style="left:513.70px;top:255.64px;width:38.40px;height:13.56px;background:#edb700"></div>
<div class="a" style="left:552.10px;top:255.64px;width:38.40px;height:13.56px;background:#edd600"></div>
<div class="a" style="left:590.50px;top:255.64px;width:38.40px;height:13.56px;background:#e4ed00"></div>
<div class="a" style="left:628.90px;top:255.64px;width:38.40px;height:13.56px;background:#c6ed00"></div>
<div class="a" style="left:667.30px;top:255.64px;width:38.40px;height:13.56px;background:#aaed00"></div>
<div class="a" style="left:705.70px;top:255.64px;width:38.40px;height:13.56px;background:#8fed00"></div>
<div class="a" style="left:744.10px;top:255.64px;width:38.40px;height:13.56px;background:#7eed00"></div>
<div class="a" style="left:782.50px;top:255.64px;width:38.40px;height:13.56px;background:#4fed00"></div>
<div class="a" style="left:820.90px;top:255.64px;width:38.40px;height:13.56px;background:#24ed00"></div>
<div class="a" style="left:859.30px;top:255.64px;width:38.40px;height:13.56px;background:#00ed01"></div>
<div class="a" style="left:897.70px;top:255.64px;width:38.40px;height:13.56px;background:#00ed26"></div>
<div class="a" style="left:936.10px;top:255.64px;width:7.90px;height:13.56px;background:#00ed26"></div>
<div class="a" style="left:282px;top:281.76px;width:39.7px;height:1px;background:#ececec"></div>
<div class="t" style="right:961.50px;top:271.40px;font-size:10px;font-weight:bold;color:#222">6500</div>
<div class="a" style="left:321.70px;top:269.20px;width:38.40px;height:13.56px;background:#ed6600"></div>
<div class="a" style="left:360.10px;top:269.20px;width:38.40px;height:13.56px;background:#ed6e00"></div>
<div class="a" style="left:398.50px;top:269.20px;width:38.40px;height:13.56px;background:#ed7800"></div>
<div class="a" style="left:436.90px;top:269.20px;width:38.40px;height:13.56px;background:#ed8300"></div>
<div class="a" style="left:475.30px;top:269.20px;width:38.40px;height:13.56px;background:#ed9000"></div>
<div class="a" style="left:513.70px;top:269.20px;width:38.40px;height:13.56px;background:#edbe00"></div>
<div class="a" style="left:552.10px;top:269.20px;width:38.40px;height:13.56px;background:#eddf00"></div>
<div class="a" style="left:590.50px;top:269.20px;width:38.40px;height:13.56px;background:#daed00"></div>
<div class="a" style="left:628.90px;top:269.20px;width:38.40px;height:13.56px;background:#bded00"></div>
<div class="a" style="left:667.30px;top:269.20px;width:38.40px;height:13.56px;background:#a1ed00"></div>
<div class="a" style="left:705.70px;top:269.20px;width:38.40px;height:13.56px;background:#84ed00"></div>
<div class="a" style="left:744.10px;top:269.20px;width:38.40px;height:13.56px;background:#73ed00"></div>
<div class="a" style="left:782.50px;top:269.20px;width:38.40px;height:13.56px;background:#42ed00"></div>
<div class="a" style="left:820.90px;top:269.20px;width:38.40px;height:13.56px;background:#19ed00"></div>
<div class="a" style="left:859.30px;top:269.20px;width:38.40px;height:13.56px;background:#00ed0b"></div>
<div class="a" style="left:897.70px;top:269.20px;width:38.40px;height:13.56px;background:#00ed31"></div>
<div class="a" style="left:936.10px;top:269.20px;width:7.90px;height:13.56px;background:#00ed31"></div>
<div class="a" style="left:282px;top:295.32px;width:39.7px;height:1px;background:#ececec"></div>
<div class="t" style="right:961.50px;top:284.96px;font-size:10px;font-weight:bold;color:#222">6000</div>
<div class="a" style="left:321.70px;top:282.76px;width:38.40px;height:13.56px;background:#ed5400"></div>
<div class="a" style="left:360.10px;top:282.76px;width:38.40px;height:13.56px;background:#ed5c00"></div>
<div class="a" style="left:398.50px;top:282.76px;width:38.40px;height:13.56px;background:#ed6900"></div>
<div class="a" style="left:436.90px;top:282.76px;width:38.40px;height:13.56px;background:#ed7e00"></div>
<div class="a" style="left:475.30px;top:282.76px;width:38.40px;height:13.56px;background:#ed9500"></div>
<div class="a" style="left:513.70px;top:282.76px;width:38.40px;height:13.56px;background:#edb900"></div>
<div class="a" style="left:552.10px;top:282.76px;width:38.40px;height:13.56px;background:#eddb00"></div>
<div class="a" style="left:590.50px;top:282.76px;width:38.40px;height:13.56px;background:#dced00"></div>
<div class="a" style="left:628.90px;top:282.76px;width:38.40px;height:13.56px;background:#bded00"></div>
<div class="a" style="left:667.30px;top:282.76px;width:38.40px;height:13.56px;background:#a0ed00"></div>
<div class="a" style="left:705.70px;top:282.76px;width:38.40px;height:13.56px;background:#82ed00"></div>
<div class="a" style="left:744.10px;top:282.76px;width:38.40px;height:13.56px;background:#71ed00"></div>
<div class="a" style="left:782.50px;top:282.76px;width:38.40px;height:13.56px;background:#40ed00"></div>
<div class="a" style="left:820.90px;top:282.76px;width:38.40px;height:13.56px;background:#17ed00"></div>
<div class="a" style="left:859.30px;top:282.76px;width:38.40px;height:13.56px;background:#00ed0d"></div>
<div class="a" style="left:897.70px;top:282.76px;width:38.40px;height:13.56px;background:#00ed33"></div>
<div class="a" style="left:936.10px;top:282.76px;width:7.90px;height:13.56px;background:#00ed33"></div>
<div class="a" style="left:282px;top:296.32px;width:39.7px;height:13.56px;background:#c89498"></div>
<div class="a" style="left:282px;top:308.88px;width:39.7px;height:1px;background:#ececec"></div>
<div class="t" style="right:961.50px;top:298.52px;font-size:10px;font-weight:bold;color:#222">5500</div>
<div class="a" style="left:321.70px;top:296.32px;width:38.40px;height:13.56px;background:#ed4100"></div>
<div class="a" style="left:360.10px;top:296.32px;width:38.40px;height:13.56px;background:#ed4c00"></div>
<div class="a" style="left:398.50px;top:296.32px;width:38.40px;height:13.56px;background:#ed5c00"></div>
<div class="a" style="left:436.90px;top:296.32px;width:38.40px;height:13.56px;background:#ed7700"></div>
<div class="a" style="left:475.30px;top:296.32px;width:38.40px;height:13.56px;background:#ed9500"></div>
<div class="a" style="left:513.70px;top:296.32px;width:38.40px;height:13.56px;background:#edb400"></div>
<div class="a" style="left:552.10px;top:296.32px;width:38.40px;height:13.56px;background:#edd100"></div>
<div class="a" style="left:590.50px;top:296.32px;width:38.40px;height:13.56px;background:#eaed00"></div>
<div class="a" style="left:628.90px;top:296.32px;width:38.40px;height:13.56px;background:#cded00"></div>
<div class="a" style="left:667.30px;top:296.32px;width:38.40px;height:13.56px;background:#b3ed00"></div>
<div class="a" style="left:705.70px;top:296.32px;width:38.40px;height:13.56px;background:#99ed00"></div>
<div class="a" style="left:744.10px;top:296.32px;width:38.40px;height:13.56px;background:#88ed00"></div>
<div class="a" style="left:782.50px;top:296.32px;width:38.40px;height:13.56px;background:#5aed00"></div>
<div class="a" style="left:820.90px;top:296.32px;width:38.40px;height:13.56px;background:#2ded00"></div>
<div class="a" style="left:859.30px;top:296.32px;width:38.40px;height:13.56px;background:#07ed00"></div>
<div class="a" style="left:897.70px;top:296.32px;width:38.40px;height:13.56px;background:#00ed1c"></div>
<div class="a" style="left:936.10px;top:296.32px;width:7.90px;height:13.56px;background:#00ed1c"></div>
<div class="a" style="left:282px;top:322.44px;width:39.7px;height:1px;background:#ececec"></div>
<div class="t" style="right:961.50px;top:312.08px;font-size:10px;font-weight:bold;color:#222">5000</div>
<div class="a" style="left:321.70px;top:309.88px;width:38.40px;height:13.56px;background:#ed3700"></div>
<div class="a" style="left:360.10px;top:309.88px;width:38.40px;height:13.56px;background:#ed4400"></div>
<div class="a" style="left:398.50px;top:309.88px;width:38.40px;height:13.56px;background:#ed5500"></div>
<div class="a" style="left:436.90px;top:309.88px;width:38.40px;height:13.56px;background:#ed6e00"></div>
<div class="a" style="left:475.30px;top:309.88px;width:38.40px;height:13.56px;background:#ed8900"></div>
<div class="a" style="left:513.70px;top:309.88px;width:38.40px;height:13.56px;background:#eda600"></div>
<div class="a" style="left:552.10px;top:309.88px;width:38.40px;height:13.56px;background:#edd100"></div>
<div class="a" style="left:590.50px;top:309.88px;width:38.40px;height:13.56px;background:#ede900"></div>
<div class="a" style="left:628.90px;top:309.88px;width:38.40px;height:13.56px;background:#d5ed00"></div>
<div class="a" style="left:667.30px;top:309.88px;width:38.40px;height:13.56px;background:#b3ed00"></div>
<div class="a" style="left:705.70px;top:309.88px;width:38.40px;height:13.56px;background:#99ed00"></div>
<div class="a" style="left:744.10px;top:309.88px;width:38.40px;height:13.56px;background:#88ed00"></div>
<div class="a" style="left:782.50px;top:309.88px;width:38.40px;height:13.56px;background:#5aed00"></div>
<div class="a" style="left:820.90px;top:309.88px;width:38.40px;height:13.56px;background:#2ded00"></div>
<div class="a" style="left:859.30px;top:309.88px;width:38.40px;height:13.56px;background:#07ed00"></div>
<div class="a" style="left:897.70px;top:309.88px;width:38.40px;height:13.56px;background:#00ed1c"></div>
<div class="a" style="left:936.10px;top:309.88px;width:7.90px;height:13.56px;background:#00ed1c"></div>
<div class="a" style="left:282px;top:336.00px;width:39.7px;height:1px;background:#ececec"></div>
<div class="t" style="right:961.50px;top:325.64px;font-size:10px;font-weight:bold;color:#222">4500</div>
<div class="a" style="left:321.70px;top:323.44px;width:38.40px;height:13.56px;background:#ed2d00"></div>
<div class="a" style="left:360.10px;top:323.44px;width:38.40px;height:13.56px;background:#ed3d00"></div>
<div class="a" style="left:398.50px;top:323.44px;width:38.40px;height:13.56px;background:#ed4e00"></div>
<div class="a" style="left:436.90px;top:323.44px;width:38.40px;height:13.56px;background:#ed5b00"></div>
<div class="a" style="left:475.30px;top:323.44px;width:38.40px;height:13.56px;background:#ed6800"></div>
<div class="a" style="left:513.70px;top:323.44px;width:38.40px;height:13.56px;background:#ed7500"></div>
<div class="a" style="left:552.10px;top:323.44px;width:38.40px;height:13.56px;background:#ed9600"></div>
<div class="a" style="left:590.50px;top:323.44px;width:38.40px;height:13.56px;background:#edb900"></div>
<div class="a" style="left:628.90px;top:323.44px;width:38.40px;height:13.56px;background:#ede600"></div>
<div class="a" style="left:667.30px;top:323.44px;width:38.40px;height:13.56px;background:#c5ed00"></div>
<div class="a" style="left:705.70px;top:323.44px;width:38.40px;height:13.56px;background:#a5ed00"></div>
<div class="a" style="left:744.10px;top:323.44px;width:38.40px;height:13.56px;background:#95ed00"></div>
<div class="a" style="left:782.50px;top:323.44px;width:38.40px;height:13.56px;background:#69ed00"></div>
<div class="a" style="left:820.90px;top:323.44px;width:38.40px;height:13.56px;background:#39ed00"></div>
<div class="a" style="left:859.30px;top:323.44px;width:38.40px;height:13.56px;background:#12ed00"></div>
<div class="a" style="left:897.70px;top:323.44px;width:38.40px;height:13.56px;background:#00ed10"></div>
<div class="a" style="left:936.10px;top:323.44px;width:7.90px;height:13.56px;background:#00ed10"></div>
<div class="a" style="left:282px;top:349.56px;width:39.7px;height:1px;background:#ececec"></div>
<div class="t" style="right:961.50px;top:339.20px;font-size:10px;font-weight:bold;color:#222">4000</div>
<div class="a" style="left:321.70px;top:337.00px;width:38.40px;height:13.56px;background:#ed2900"></div>
<div class="a" style="left:360.10px;top:337.00px;width:38.40px;height:13.56px;background:#ed3700"></div>
<div class="a" style="left:398.50px;top:337.00px;width:38.40px;height:13.56px;background:#ed4700"></div>
<div class="a" style="left:436.90px;top:337.00px;width:38.40px;height:13.56px;background:#ed5100"></div>
<div class="a" style="left:475.30px;top:337.00px;width:38.40px;height:13.56px;background:#ed5b00"></div>
<div class="a" style="left:513.70px;top:337.00px;width:38.40px;height:13.56px;background:#ed6400"></div>
<div class="a" style="left:552.10px;top:337.00px;width:38.40px;height:13.56px;background:#ed8100"></div>
<div class="a" style="left:590.50px;top:337.00px;width:38.40px;height:13.56px;background:#eda000"></div>
<div class="a" style="left:628.90px;top:337.00px;width:38.40px;height:13.56px;background:#edb600"></div>
<div class="a" style="left:667.30px;top:337.00px;width:38.40px;height:13.56px;background:#edda00"></div>
<div class="a" style="left:705.70px;top:337.00px;width:38.40px;height:13.56px;background:#bbed00"></div>
<div class="a" style="left:744.10px;top:337.00px;width:38.40px;height:13.56px;background:#aaed00"></div>
<div class="a" style="left:782.50px;top:337.00px;width:38.40px;height:13.56px;background:#7fed00"></div>
<div class="a" style="left:820.90px;top:337.00px;width:38.40px;height:13.56px;background:#53ed00"></div>
<div class="a" style="left:859.30px;top:337.00px;width:38.40px;height:13.56px;background:#29ed00"></div>
<div class="a" style="left:897.70px;top:337.00px;width:38.40px;height:13.56px;background:#04ed00"></div>
<div class="a" style="left:936.10px;top:337.00px;width:7.90px;height:13.56px;background:#04ed00"></div>
<div class="a" style="left:282px;top:363.12px;width:39.7px;height:1px;background:#ececec"></div>
<div class="t" style="right:961.50px;top:352.76px;font-size:10px;font-weight:bold;color:#222">3500</div>
<div class="a" style="left:321.70px;top:350.56px;width:38.40px;height:13.56px;background:#ed2600"></div>
<div class="a" style="left:360.10px;top:350.56px;width:38.40px;height:13.56px;background:#ed3000"></div>
<div class="a" style="left:398.50px;top:350.56px;width:38.40px;height:13.56px;background:#ed4100"></div>
<div class="a" style="left:436.90px;top:350.56px;width:38.40px;height:13.56px;background:#ed4700"></div>
<div class="a" style="left:475.30px;top:350.56px;width:38.40px;height:13.56px;background:#ed4d00"></div>
<div class="a" style="left:513.70px;top:350.56px;width:38.40px;height:13.56px;background:#ed5400"></div>
<div class="a" style="left:552.10px;top:350.56px;width:38.40px;height:13.56px;background:#ed7100"></div>
<div class="a" style="left:590.50px;top:350.56px;width:38.40px;height:13.56px;background:#ed8b00"></div>
<div class="a" style="left:628.90px;top:350.56px;width:38.40px;height:13.56px;background:#eda500"></div>
<div class="a" style="left:667.30px;top:350.56px;width:38.40px;height:13.56px;background:#edcd00"></div>
<div class="a" style="left:705.70px;top:350.56px;width:38.40px;height:13.56px;background:#deed00"></div>
<div class="a" style="left:744.10px;top:350.56px;width:38.40px;height:13.56px;background:#cced00"></div>
<div class="a" style="left:782.50px;top:350.56px;width:38.40px;height:13.56px;background:#a4ed00"></div>
<div class="a" style="left:820.90px;top:350.56px;width:38.40px;height:13.56px;background:#7bed00"></div>
<div class="a" style="left:859.30px;top:350.56px;width:38.40px;height:13.56px;background:#4eed00"></div>
<div class="a" style="left:897.70px;top:350.56px;width:38.40px;height:13.56px;background:#26ed00"></div>
<div class="a" style="left:936.10px;top:350.56px;width:7.90px;height:13.56px;background:#26ed00"></div>
<div class="a" style="left:282px;top:376.68px;width:39.7px;height:1px;background:#ececec"></div>
<div class="t" style="right:961.50px;top:366.32px;font-size:10px;font-weight:bold;color:#222">3250</div>
<div class="a" style="left:321.70px;top:364.12px;width:38.40px;height:13.56px;background:#ed2400"></div>
<div class="a" style="left:360.10px;top:364.12px;width:38.40px;height:13.56px;background:#ed2d00"></div>
<div class="a" style="left:398.50px;top:364.12px;width:38.40px;height:13.56px;background:#ed3e00"></div>
<div class="a" style="left:436.90px;top:364.12px;width:38.40px;height:13.56px;background:#ed4300"></div>
<div class="a" style="left:475.30px;top:364.12px;width:38.40px;height:13.56px;background:#ed4a00"></div>
<div class="a" style="left:513.70px;top:364.12px;width:38.40px;height:13.56px;background:#ed5100"></div>
<div class="a" style="left:552.10px;top:364.12px;width:38.40px;height:13.56px;background:#ed6000"></div>
<div class="a" style="left:590.50px;top:364.12px;width:38.40px;height:13.56px;background:#ed7900"></div>
<div class="a" style="left:628.90px;top:364.12px;width:38.40px;height:13.56px;background:#ed9400"></div>
<div class="a" style="left:667.30px;top:364.12px;width:38.40px;height:13.56px;background:#eda600"></div>
<div class="a" style="left:705.70px;top:364.12px;width:38.40px;height:13.56px;background:#edec00"></div>
<div class="a" style="left:744.10px;top:364.12px;width:38.40px;height:13.56px;background:#daed00"></div>
<div class="a" style="left:782.50px;top:364.12px;width:38.40px;height:13.56px;background:#b1ed00"></div>
<div class="a" style="left:820.90px;top:364.12px;width:38.40px;height:13.56px;background:#88ed00"></div>
<div class="a" style="left:859.30px;top:364.12px;width:38.40px;height:13.56px;background:#5eed00"></div>
<div class="a" style="left:897.70px;top:364.12px;width:38.40px;height:13.56px;background:#33ed00"></div>
<div class="a" style="left:936.10px;top:364.12px;width:7.90px;height:13.56px;background:#33ed00"></div>
<div class="a" style="left:282px;top:390.24px;width:39.7px;height:1px;background:#ececec"></div>
<div class="t" style="right:961.50px;top:379.88px;font-size:10px;font-weight:bold;color:#222">3000</div>
<div class="a" style="left:321.70px;top:377.68px;width:38.40px;height:13.56px;background:#ed2300"></div>
<div class="a" style="left:360.10px;top:377.68px;width:38.40px;height:13.56px;background:#ed2a00"></div>
<div class="a" style="left:398.50px;top:377.68px;width:38.40px;height:13.56px;background:#ed3b00"></div>
<div class="a" style="left:436.90px;top:377.68px;width:38.40px;height:13.56px;background:#ed3e00"></div>
<div class="a" style="left:475.30px;top:377.68px;width:38.40px;height:13.56px;background:#ed4100"></div>
<div class="a" style="left:513.70px;top:377.68px;width:38.40px;height:13.56px;background:#ed4400"></div>
<div class="a" style="left:552.10px;top:377.68px;width:38.40px;height:13.56px;background:#ed5800"></div>
<div class="a" style="left:590.50px;top:377.68px;width:38.40px;height:13.56px;background:#ed6a00"></div>
<div class="a" style="left:628.90px;top:377.68px;width:38.40px;height:13.56px;background:#ed8000"></div>
<div class="a" style="left:667.30px;top:377.68px;width:38.40px;height:13.56px;background:#ed9600"></div>
<div class="a" style="left:705.70px;top:377.68px;width:38.40px;height:13.56px;background:#eddd00"></div>
<div class="a" style="left:744.10px;top:377.68px;width:38.40px;height:13.56px;background:#e9ed00"></div>
<div class="a" style="left:782.50px;top:377.68px;width:38.40px;height:13.56px;background:#bfed00"></div>
<div class="a" style="left:820.90px;top:377.68px;width:38.40px;height:13.56px;background:#97ed00"></div>
<div class="a" style="left:859.30px;top:377.68px;width:38.40px;height:13.56px;background:#6eed00"></div>
<div class="a" style="left:897.70px;top:377.68px;width:38.40px;height:13.56px;background:#42ed00"></div>
<div class="a" style="left:936.10px;top:377.68px;width:7.90px;height:13.56px;background:#42ed00"></div>
<div class="a" style="left:282px;top:403.80px;width:39.7px;height:1px;background:#ececec"></div>
<div class="t" style="right:961.50px;top:393.44px;font-size:10px;font-weight:bold;color:#222">2500</div>
<div class="a" style="left:321.70px;top:391.24px;width:38.40px;height:13.56px;background:#ed2000"></div>
<div class="a" style="left:360.10px;top:391.24px;width:38.40px;height:13.56px;background:#ed2700"></div>
<div class="a" style="left:398.50px;top:391.24px;width:38.40px;height:13.56px;background:#ed3300"></div>
<div class="a" style="left:436.90px;top:391.24px;width:38.40px;height:13.56px;background:#ed3400"></div>
<div class="a" style="left:475.30px;top:391.24px;width:38.40px;height:13.56px;background:#ed3d00"></div>
<div class="a" style="left:513.70px;top:391.24px;width:38.40px;height:13.56px;background:#ed4500"></div>
<div class="a" style="left:552.10px;top:391.24px;width:38.40px;height:13.56px;background:#ed4e00"></div>
<div class="a" style="left:590.50px;top:391.24px;width:38.40px;height:13.56px;background:#ed6000"></div>
<div class="a" style="left:628.90px;top:391.24px;width:38.40px;height:13.56px;background:#ed7200"></div>
<div class="a" style="left:667.30px;top:391.24px;width:38.40px;height:13.56px;background:#ed8d00"></div>
<div class="a" style="left:705.70px;top:391.24px;width:38.40px;height:13.56px;background:#edd700"></div>
<div class="a" style="left:744.10px;top:391.24px;width:38.40px;height:13.56px;background:#edea00"></div>
<div class="a" style="left:782.50px;top:391.24px;width:38.40px;height:13.56px;background:#c5ed00"></div>
<div class="a" style="left:820.90px;top:391.24px;width:38.40px;height:13.56px;background:#9ced00"></div>
<div class="a" style="left:859.30px;top:391.24px;width:38.40px;height:13.56px;background:#74ed00"></div>
<div class="a" style="left:897.70px;top:391.24px;width:38.40px;height:13.56px;background:#49ed00"></div>
<div class="a" style="left:936.10px;top:391.24px;width:7.90px;height:13.56px;background:#49ed00"></div>
<div class="a" style="left:282px;top:417.36px;width:39.7px;height:1px;background:#ececec"></div>
<div class="t" style="right:961.50px;top:407.00px;font-size:10px;font-weight:bold;color:#222">2000</div>
<div class="a" style="left:321.70px;top:404.80px;width:38.40px;height:13.56px;background:#ed2c00"></div>
<div class="a" style="left:360.10px;top:404.80px;width:38.40px;height:13.56px;background:#ed2900"></div>
<div class="a" style="left:398.50px;top:404.80px;width:38.40px;height:13.56px;background:#ed2f00"></div>
<div class="a" style="left:436.90px;top:404.80px;width:38.40px;height:13.56px;background:#ed3300"></div>
<div class="a" style="left:475.30px;top:404.80px;width:38.40px;height:13.56px;background:#ed3a00"></div>
<div class="a" style="left:513.70px;top:404.80px;width:38.40px;height:13.56px;background:#ed3d00"></div>
<div class="a" style="left:552.10px;top:404.80px;width:38.40px;height:13.56px;background:#ed4400"></div>
<div class="a" style="left:590.50px;top:404.80px;width:38.40px;height:13.56px;background:#ed5400"></div>
<div class="a" style="left:628.90px;top:404.80px;width:38.40px;height:13.56px;background:#ed6400"></div>
<div class="a" style="left:667.30px;top:404.80px;width:38.40px;height:13.56px;background:#ed8300"></div>
<div class="a" style="left:705.70px;top:404.80px;width:38.40px;height:13.56px;background:#edb800"></div>
<div class="a" style="left:744.10px;top:404.80px;width:38.40px;height:13.56px;background:#edcb00"></div>
<div class="a" style="left:782.50px;top:404.80px;width:38.40px;height:13.56px;background:#e3ed00"></div>
<div class="a" style="left:820.90px;top:404.80px;width:38.40px;height:13.56px;background:#bbed00"></div>
<div class="a" style="left:859.30px;top:404.80px;width:38.40px;height:13.56px;background:#93ed00"></div>
<div class="a" style="left:897.70px;top:404.80px;width:38.40px;height:13.56px;background:#6ced00"></div>
<div class="a" style="left:936.10px;top:404.80px;width:7.90px;height:13.56px;background:#6ced00"></div>
<div class="a" style="left:282px;top:430.92px;width:39.7px;height:1px;background:#ececec"></div>
<div class="t" style="right:961.50px;top:420.56px;font-size:10px;font-weight:bold;color:#222">1500</div>
<div class="a" style="left:321.70px;top:418.36px;width:38.40px;height:13.56px;background:#ed2b00"></div>
<div class="a" style="left:360.10px;top:418.36px;width:38.40px;height:13.56px;background:#ed2400"></div>
<div class="a" style="left:398.50px;top:418.36px;width:38.40px;height:13.56px;background:#ed2700"></div>
<div class="a" style="left:436.90px;top:418.36px;width:38.40px;height:13.56px;background:#ed2b00"></div>
<div class="a" style="left:475.30px;top:418.36px;width:38.40px;height:13.56px;background:#ed3600"></div>
<div class="a" style="left:513.70px;top:418.36px;width:38.40px;height:13.56px;background:#ed3b00"></div>
<div class="a" style="left:552.10px;top:418.36px;width:38.40px;height:13.56px;background:#ed4600"></div>
<div class="a" style="left:590.50px;top:418.36px;width:38.40px;height:13.56px;background:#ed5800"></div>
<div class="a" style="left:628.90px;top:418.36px;width:38.40px;height:13.56px;background:#ed6b00"></div>
<div class="a" style="left:667.30px;top:418.36px;width:38.40px;height:13.56px;background:#ed7700"></div>
<div class="a" style="left:705.70px;top:418.36px;width:38.40px;height:13.56px;background:#eda900"></div>
<div class="a" style="left:744.10px;top:418.36px;width:38.40px;height:13.56px;background:#edb800"></div>
<div class="a" style="left:782.50px;top:418.36px;width:38.40px;height:13.56px;background:#ede400"></div>
<div class="a" style="left:820.90px;top:418.36px;width:38.40px;height:13.56px;background:#cced00"></div>
<div class="a" style="left:859.30px;top:418.36px;width:38.40px;height:13.56px;background:#a6ed00"></div>
<div class="a" style="left:897.70px;top:418.36px;width:38.40px;height:13.56px;background:#7fed00"></div>
<div class="a" style="left:936.10px;top:418.36px;width:7.90px;height:13.56px;background:#7fed00"></div>
<div class="a" style="left:282px;top:444.48px;width:39.7px;height:1px;background:#ececec"></div>
<div class="t" style="right:961.50px;top:434.12px;font-size:10px;font-weight:bold;color:#222">1000</div>
<div class="a" style="left:321.70px;top:431.92px;width:38.40px;height:13.56px;background:#ed2800"></div>
<div class="a" style="left:360.10px;top:431.92px;width:38.40px;height:13.56px;background:#ed2100"></div>
<div class="a" style="left:398.50px;top:431.92px;width:38.40px;height:13.56px;background:#ed2300"></div>
<div class="a" style="left:436.90px;top:431.92px;width:38.40px;height:13.56px;background:#ed2500"></div>
<div class="a" style="left:475.30px;top:431.92px;width:38.40px;height:13.56px;background:#ed2f00"></div>
<div class="a" style="left:513.70px;top:431.92px;width:38.40px;height:13.56px;background:#ed3300"></div>
<div class="a" style="left:552.10px;top:431.92px;width:38.40px;height:13.56px;background:#ed3d00"></div>
<div class="a" style="left:590.50px;top:431.92px;width:38.40px;height:13.56px;background:#ed4700"></div>
<div class="a" style="left:628.90px;top:431.92px;width:38.40px;height:13.56px;background:#ed6100"></div>
<div class="a" style="left:667.30px;top:431.92px;width:38.40px;height:13.56px;background:#ed7300"></div>
<div class="a" style="left:705.70px;top:431.92px;width:38.40px;height:13.56px;background:#ed9b00"></div>
<div class="a" style="left:744.10px;top:431.92px;width:38.40px;height:13.56px;background:#eda900"></div>
<div class="a" style="left:782.50px;top:431.92px;width:38.40px;height:13.56px;background:#edd000"></div>
<div class="a" style="left:820.90px;top:431.92px;width:38.40px;height:13.56px;background:#dfed00"></div>
<div class="a" style="left:859.30px;top:431.92px;width:38.40px;height:13.56px;background:#b7ed00"></div>
<div class="a" style="left:897.70px;top:431.92px;width:38.40px;height:13.56px;background:#92ed00"></div>
<div class="a" style="left:936.10px;top:431.92px;width:7.90px;height:13.56px;background:#92ed00"></div>
<div class="a" style="left:282px;top:458.04px;width:39.7px;height:1px;background:#ececec"></div>
<div class="t" style="right:961.50px;top:447.68px;font-size:10px;font-weight:bold;color:#222">500</div>
<div class="a" style="left:321.70px;top:445.48px;width:38.40px;height:13.56px;background:#ed2800"></div>
<div class="a" style="left:360.10px;top:445.48px;width:38.40px;height:13.56px;background:#ed1f00"></div>
<div class="a" style="left:398.50px;top:445.48px;width:38.40px;height:13.56px;background:#ed1f00"></div>
<div class="a" style="left:436.90px;top:445.48px;width:38.40px;height:13.56px;background:#ed2100"></div>
<div class="a" style="left:475.30px;top:445.48px;width:38.40px;height:13.56px;background:#ed2900"></div>
<div class="a" style="left:513.70px;top:445.48px;width:38.40px;height:13.56px;background:#ed2c00"></div>
<div class="a" style="left:552.10px;top:445.48px;width:38.40px;height:13.56px;background:#ed3400"></div>
<div class="a" style="left:590.50px;top:445.48px;width:38.40px;height:13.56px;background:#ed3c00"></div>
<div class="a" style="left:628.90px;top:445.48px;width:38.40px;height:13.56px;background:#ed5900"></div>
<div class="a" style="left:667.30px;top:445.48px;width:38.40px;height:13.56px;background:#ed7600"></div>
<div class="a" style="left:705.70px;top:445.48px;width:38.40px;height:13.56px;background:#ed9700"></div>
<div class="a" style="left:744.10px;top:445.48px;width:38.40px;height:13.56px;background:#eda600"></div>
<div class="a" style="left:782.50px;top:445.48px;width:38.40px;height:13.56px;background:#edcb00"></div>
<div class="a" style="left:820.90px;top:445.48px;width:38.40px;height:13.56px;background:#e4ed00"></div>
<div class="a" style="left:859.30px;top:445.48px;width:38.40px;height:13.56px;background:#bded00"></div>
<div class="a" style="left:897.70px;top:445.48px;width:38.40px;height:13.56px;background:#98ed00"></div>
<div class="a" style="left:936.10px;top:445.48px;width:7.90px;height:13.56px;background:#98ed00"></div>
<div class="a" style="left:282px;top:471.60px;width:39.7px;height:1px;background:#ececec"></div>
<div class="t" style="right:961.50px;top:461.24px;font-size:10px;font-weight:bold;color:#222">0</div>
<div class="a" style="left:321.70px;top:459.04px;width:38.40px;height:13.56px;background:#ed2000"></div>
<div class="a" style="left:360.10px;top:459.04px;width:38.40px;height:13.56px;background:#ed1700"></div>
<div class="a" style="left:398.50px;top:459.04px;width:38.40px;height:13.56px;background:#ed1900"></div>
<div class="a" style="left:436.90px;top:459.04px;width:38.40px;height:13.56px;background:#ed1a00"></div>
<div class="a" style="left:475.30px;top:459.04px;width:38.40px;height:13.56px;background:#ed2300"></div>
<div class="a" style="left:513.70px;top:459.04px;width:38.40px;height:13.56px;background:#ed2700"></div>
<div class="a" style="left:552.10px;top:459.04px;width:38.40px;height:13.56px;background:#ed3100"></div>
<div class="a" style="left:590.50px;top:459.04px;width:38.40px;height:13.56px;background:#ed3b00"></div>
<div class="a" style="left:628.90px;top:459.04px;width:38.40px;height:13.56px;background:#ed5400"></div>
<div class="a" style="left:667.30px;top:459.04px;width:38.40px;height:13.56px;background:#ed6d00"></div>
<div class="a" style="left:705.70px;top:459.04px;width:38.40px;height:13.56px;background:#ed8900"></div>
<div class="a" style="left:744.10px;top:459.04px;width:38.40px;height:13.56px;background:#ed9700"></div>
<div class="a" style="left:782.50px;top:459.04px;width:38.40px;height:13.56px;background:#edb700"></div>
<div class="a" style="left:820.90px;top:459.04px;width:38.40px;height:13.56px;background:#ede100"></div>
<div class="a" style="left:859.30px;top:459.04px;width:38.40px;height:13.56px;background:#ceed00"></div>
<div class="a" style="left:897.70px;top:459.04px;width:38.40px;height:13.56px;background:#aaed00"></div>
<div class="a" style="left:936.10px;top:459.04px;width:7.90px;height:13.56px;background:#aaed00"></div>
<div class="a" style="left:321.70px;top:214px;width:622.30px;height:1px;background:rgba(255,255,255,0.42)"></div>
<div class="a" style="left:321.70px;top:228px;width:622.30px;height:1px;background:rgba(255,255,255,0.42)"></div>
<div class="a" style="left:321.70px;top:242px;width:622.30px;height:1px;background:rgba(255,255,255,0.42)"></div>
<div class="a" style="left:321.70px;top:255px;width:622.30px;height:1px;background:rgba(255,255,255,0.42)"></div>
<div class="a" style="left:321.70px;top:269px;width:622.30px;height:1px;background:rgba(255,255,255,0.42)"></div>
<div class="a" style="left:321.70px;top:282px;width:622.30px;height:1px;background:rgba(255,255,255,0.42)"></div>
<div class="a" style="left:321.70px;top:296px;width:622.30px;height:1px;background:rgba(255,255,255,0.42)"></div>
<div class="a" style="left:321.70px;top:309px;width:622.30px;height:1px;background:rgba(255,255,255,0.42)"></div>
<div class="a" style="left:321.70px;top:323px;width:622.30px;height:1px;background:rgba(255,255,255,0.42)"></div>
<div class="a" style="left:321.70px;top:336px;width:622.30px;height:1px;background:rgba(255,255,255,0.42)"></div>
<div class="a" style="left:321.70px;top:350px;width:622.30px;height:1px;background:rgba(255,255,255,0.42)"></div>
<div class="a" style="left:321.70px;top:364px;width:622.30px;height:1px;background:rgba(255,255,255,0.42)"></div>
<div class="a" style="left:321.70px;top:377px;width:622.30px;height:1px;background:rgba(255,255,255,0.42)"></div>
<div class="a" style="left:321.70px;top:391px;width:622.30px;height:1px;background:rgba(255,255,255,0.42)"></div>
<div class="a" style="left:321.70px;top:404px;width:622.30px;height:1px;background:rgba(255,255,255,0.42)"></div>
<div class="a" style="left:321.70px;top:418px;width:622.30px;height:1px;background:rgba(255,255,255,0.42)"></div>
<div class="a" style="left:321.70px;top:431px;width:622.30px;height:1px;background:rgba(255,255,255,0.42)"></div>
<div class="a" style="left:321.70px;top:445px;width:622.30px;height:1px;background:rgba(255,255,255,0.42)"></div>
<div class="a" style="left:321.70px;top:459px;width:622.30px;height:1px;background:rgba(255,255,255,0.42)"></div>
<div class="a" style="left:360px;top:201.40px;width:1px;height:271.20px;background:rgba(255,255,255,0.42)"></div>
<div class="a" style="left:398px;top:201.40px;width:1px;height:271.20px;background:rgba(255,255,255,0.42)"></div>
<div class="a" style="left:436px;top:201.40px;width:1px;height:271.20px;background:rgba(255,255,255,0.42)"></div>
<div class="a" style="left:475px;top:201.40px;width:1px;height:271.20px;background:rgba(255,255,255,0.42)"></div>
<div class="a" style="left:513px;top:201.40px;width:1px;height:271.20px;background:rgba(255,255,255,0.42)"></div>
<div class="a" style="left:552px;top:201.40px;width:1px;height:271.20px;background:rgba(255,255,255,0.42)"></div>
<div class="a" style="left:590px;top:201.40px;width:1px;height:271.20px;background:rgba(255,255,255,0.42)"></div>
<div class="a" style="left:628px;top:201.40px;width:1px;height:271.20px;background:rgba(255,255,255,0.42)"></div>
<div class="a" style="left:667px;top:201.40px;width:1px;height:271.20px;background:rgba(255,255,255,0.42)"></div>
<div class="a" style="left:705px;top:201.40px;width:1px;height:271.20px;background:rgba(255,255,255,0.42)"></div>
<div class="a" style="left:744px;top:201.40px;width:1px;height:271.20px;background:rgba(255,255,255,0.42)"></div>
<div class="a" style="left:782px;top:201.40px;width:1px;height:271.20px;background:rgba(255,255,255,0.42)"></div>
<div class="a" style="left:820px;top:201.40px;width:1px;height:271.20px;background:rgba(255,255,255,0.42)"></div>
<div class="a" style="left:859px;top:201.40px;width:1px;height:271.20px;background:rgba(255,255,255,0.42)"></div>
<div class="a" style="left:897px;top:201.40px;width:1px;height:271.20px;background:rgba(255,255,255,0.42)"></div>
<div class="a" style="left:936px;top:201.40px;width:1px;height:271.20px;background:rgba(255,255,255,0.42)"></div>
<div class="t" style="right:921.90px;top:203.50px;font-size:10.2px;color:#2a2210">65.7</div>
<div class="t" style="right:883.50px;top:203.50px;font-size:10.2px;color:#2a2210">66.7</div>
<div class="t" style="right:845.10px;top:203.50px;font-size:10.2px;color:#2a2210">68.8</div>
<div class="t" style="right:806.70px;top:203.50px;font-size:10.2px;color:#2a2210">70.8</div>
<div class="t" style="right:768.30px;top:203.50px;font-size:10.2px;color:#2a2210">72.7</div>
<div class="t" style="right:729.90px;top:203.50px;font-size:10.2px;color:#2a2210">74.6</div>
<div class="t" style="right:691.50px;top:203.50px;font-size:10.2px;color:#2a2210">75.4</div>
<div class="t" style="right:653.10px;top:203.50px;font-size:10.2px;color:#2a2210">76.1</div>
<div class="t" style="right:614.70px;top:203.50px;font-size:10.2px;color:#2a2210">76.9</div>
<div class="t" style="right:576.30px;top:203.50px;font-size:10.2px;color:#2a2210">77.6</div>
<div class="t" style="right:537.90px;top:203.50px;font-size:10.2px;color:#2a2210">78.4</div>
<div class="t" style="right:499.50px;top:203.50px;font-size:10.2px;color:#2a2210">79.9</div>
<div class="t" style="right:461.10px;top:203.50px;font-size:10.2px;color:#2a2210">83.6</div>
<div class="t" style="right:422.70px;top:203.50px;font-size:10.2px;color:#2a2210">87.4</div>
<div class="t" style="right:384.30px;top:203.50px;font-size:10.2px;color:#2a2210">91.1</div>
<div class="t" style="right:345.90px;top:203.50px;font-size:10.2px;color:#2a2210">94.8</div>
<div class="t" style="right:921.90px;top:217.06px;font-size:10.2px;color:#2a2210">65.7</div>
<div class="t" style="right:883.50px;top:217.06px;font-size:10.2px;color:#2a2210">66.7</div>
<div class="t" style="right:845.10px;top:217.06px;font-size:10.2px;color:#2a2210">68.8</div>
<div class="t" style="right:806.70px;top:217.06px;font-size:10.2px;color:#2a2210">69.8</div>
<div class="t" style="right:768.30px;top:217.06px;font-size:10.2px;color:#2a2210">70.9</div>
<div class="t" style="right:729.90px;top:217.06px;font-size:10.2px;color:#2a2210">72.3</div>
<div class="t" style="right:691.50px;top:217.06px;font-size:10.2px;color:#2a2210">73.9</div>
<div class="t" style="right:653.10px;top:217.06px;font-size:10.2px;color:#2a2210">75.6</div>
<div class="t" style="right:614.70px;top:217.06px;font-size:10.2px;color:#2a2210">77.2</div>
<div class="t" style="right:576.30px;top:217.06px;font-size:10.2px;color:#2a2210">78.9</div>
<div class="t" style="right:537.90px;top:217.06px;font-size:10.2px;color:#2a2210">80.5</div>
<div class="t" style="right:499.50px;top:217.06px;font-size:10.2px;color:#2a2210">82.0</div>
<div class="t" style="right:461.10px;top:217.06px;font-size:10.2px;color:#2a2210">85.8</div>
<div class="t" style="right:422.70px;top:217.06px;font-size:10.2px;color:#2a2210">89.6</div>
<div class="t" style="right:384.30px;top:217.06px;font-size:10.2px;color:#2a2210">93.4</div>
<div class="t" style="right:345.90px;top:217.06px;font-size:10.2px;color:#2a2210">97.2</div>
<div class="t" style="right:921.90px;top:230.62px;font-size:10.2px;color:#2a2210">65.7</div>
<div class="t" style="right:883.50px;top:230.62px;font-size:10.2px;color:#2a2210">66.7</div>
<div class="t" style="right:845.10px;top:230.62px;font-size:10.2px;color:#2a2210">68.8</div>
<div class="t" style="right:806.70px;top:230.62px;font-size:10.2px;color:#2a2210">69.8</div>
<div class="t" style="right:768.30px;top:230.62px;font-size:10.2px;color:#2a2210">70.9</div>
<div class="t" style="right:729.90px;top:230.62px;font-size:10.2px;color:#2a2210">72.3</div>
<div class="t" style="right:691.50px;top:230.62px;font-size:10.2px;color:#2a2210">74.3</div>
<div class="t" style="right:653.10px;top:230.62px;font-size:10.2px;color:#2a2210">76.4</div>
<div class="t" style="right:614.70px;top:230.62px;font-size:10.2px;color:#2a2210">78.4</div>
<div class="t" style="right:576.30px;top:230.62px;font-size:10.2px;color:#2a2210">80.5</div>
<div class="t" style="right:537.90px;top:230.62px;font-size:10.2px;color:#2a2210">82.5</div>
<div class="t" style="right:499.50px;top:230.62px;font-size:10.2px;color:#2a2210">84.0</div>
<div class="t" style="right:461.10px;top:230.62px;font-size:10.2px;color:#2a2210">87.9</div>
<div class="t" style="right:422.70px;top:230.62px;font-size:10.2px;color:#2a2210">91.8</div>
<div class="t" style="right:384.30px;top:230.62px;font-size:10.2px;color:#2a2210">95.6</div>
<div class="t" style="right:345.90px;top:230.62px;font-size:10.2px;color:#2a2210">99.5</div>
<div class="t" style="right:921.90px;top:244.18px;font-size:10.2px;color:#2a2210">65.7</div>
<div class="t" style="right:883.50px;top:244.18px;font-size:10.2px;color:#2a2210">66.7</div>
<div class="t" style="right:845.10px;top:244.18px;font-size:10.2px;color:#2a2210">68.8</div>
<div class="t" style="right:806.70px;top:244.18px;font-size:10.2px;color:#2a2210">69.8</div>
<div class="t" style="right:768.30px;top:244.18px;font-size:10.2px;color:#2a2210">70.9</div>
<div class="t" style="right:729.90px;top:244.18px;font-size:10.2px;color:#2a2210">72.3</div>
<div class="t" style="right:691.50px;top:244.18px;font-size:10.2px;color:#2a2210">74.5</div>
<div class="t" style="right:653.10px;top:244.18px;font-size:10.2px;color:#2a2210">76.8</div>
<div class="t" style="right:614.70px;top:244.18px;font-size:10.2px;color:#2a2210">79.0</div>
<div class="t" style="right:576.30px;top:244.18px;font-size:10.2px;color:#2a2210">81.3</div>
<div class="t" style="right:537.90px;top:244.18px;font-size:10.2px;color:#2a2210">83.5</div>
<div class="t" style="right:499.50px;top:244.18px;font-size:10.2px;color:#2a2210">85.0</div>
<div class="t" style="right:461.10px;top:244.18px;font-size:10.2px;color:#2a2210">88.9</div>
<div class="t" style="right:422.70px;top:244.18px;font-size:10.2px;color:#2a2210">92.8</div>
<div class="t" style="right:384.30px;top:244.18px;font-size:10.2px;color:#2a2210">96.8</div>
<div class="t" style="right:345.90px;top:244.18px;font-size:10.2px;color:#2a2210">100.7</div>
<div class="t" style="right:921.90px;top:257.74px;font-size:10.2px;color:#2a2210">64.4</div>
<div class="t" style="right:883.50px;top:257.74px;font-size:10.2px;color:#2a2210">65.4</div>
<div class="t" style="right:845.10px;top:257.74px;font-size:10.2px;color:#2a2210">67.5</div>
<div class="t" style="right:806.70px;top:257.74px;font-size:10.2px;color:#2a2210">68.6</div>
<div class="t" style="right:768.30px;top:257.74px;font-size:10.2px;color:#2a2210">69.7</div>
<div class="t" style="right:729.90px;top:257.74px;font-size:10.2px;color:#2a2210">73.0</div>
<div class="t" style="right:691.50px;top:257.74px;font-size:10.2px;color:#2a2210">75.5</div>
<div class="t" style="right:653.10px;top:257.74px;font-size:10.2px;color:#2a2210">78.0</div>
<div class="t" style="right:614.70px;top:257.74px;font-size:10.2px;color:#2a2210">80.6</div>
<div class="t" style="right:576.30px;top:257.74px;font-size:10.2px;color:#2a2210">83.1</div>
<div class="t" style="right:537.90px;top:257.74px;font-size:10.2px;color:#2a2210">85.6</div>
<div class="t" style="right:499.50px;top:257.74px;font-size:10.2px;color:#2a2210">87.1</div>
<div class="t" style="right:461.10px;top:257.74px;font-size:10.2px;color:#2a2210">91.1</div>
<div class="t" style="right:422.70px;top:257.74px;font-size:10.2px;color:#2a2210">95.1</div>
<div class="t" style="right:384.30px;top:257.74px;font-size:10.2px;color:#2a2210">99.1</div>
<div class="t" style="right:345.90px;top:257.74px;font-size:10.2px;color:#2a2210">103.1</div>
<div class="t" style="right:921.90px;top:271.30px;font-size:10.2px;color:#2a2210">64.2</div>
<div class="t" style="right:883.50px;top:271.30px;font-size:10.2px;color:#2a2210">65.2</div>
<div class="t" style="right:845.10px;top:271.30px;font-size:10.2px;color:#2a2210">66.3</div>
<div class="t" style="right:806.70px;top:271.30px;font-size:10.2px;color:#2a2210">67.6</div>
<div class="t" style="right:768.30px;top:271.30px;font-size:10.2px;color:#2a2210">69.0</div>
<div class="t" style="right:729.90px;top:271.30px;font-size:10.2px;color:#2a2210">73.6</div>
<div class="t" style="right:691.50px;top:271.30px;font-size:10.2px;color:#2a2210">76.2</div>
<div class="t" style="right:653.10px;top:271.30px;font-size:10.2px;color:#2a2210">78.8</div>
<div class="t" style="right:614.70px;top:271.30px;font-size:10.2px;color:#2a2210">81.4</div>
<div class="t" style="right:576.30px;top:271.30px;font-size:10.2px;color:#2a2210">84.0</div>
<div class="t" style="right:537.90px;top:271.30px;font-size:10.2px;color:#2a2210">86.6</div>
<div class="t" style="right:499.50px;top:271.30px;font-size:10.2px;color:#2a2210">88.1</div>
<div class="t" style="right:461.10px;top:271.30px;font-size:10.2px;color:#2a2210">92.2</div>
<div class="t" style="right:422.70px;top:271.30px;font-size:10.2px;color:#2a2210">96.2</div>
<div class="t" style="right:384.30px;top:271.30px;font-size:10.2px;color:#2a2210">100.2</div>
<div class="t" style="right:345.90px;top:271.30px;font-size:10.2px;color:#2a2210">104.3</div>
<div class="t" style="right:921.90px;top:284.86px;font-size:10.2px;color:#2a2210">61.9</div>
<div class="t" style="right:883.50px;top:284.86px;font-size:10.2px;color:#2a2210">63.0</div>
<div class="t" style="right:845.10px;top:284.86px;font-size:10.2px;color:#2a2210">64.6</div>
<div class="t" style="right:806.70px;top:284.86px;font-size:10.2px;color:#2a2210">67.0</div>
<div class="t" style="right:768.30px;top:284.86px;font-size:10.2px;color:#2a2210">69.5</div>
<div class="t" style="right:729.90px;top:284.86px;font-size:10.2px;color:#2a2210">73.2</div>
<div class="t" style="right:691.50px;top:284.86px;font-size:10.2px;color:#2a2210">75.9</div>
<div class="t" style="right:653.10px;top:284.86px;font-size:10.2px;color:#2a2210">78.6</div>
<div class="t" style="right:614.70px;top:284.86px;font-size:10.2px;color:#2a2210">81.4</div>
<div class="t" style="right:576.30px;top:284.86px;font-size:10.2px;color:#2a2210">84.1</div>
<div class="t" style="right:537.90px;top:284.86px;font-size:10.2px;color:#2a2210">86.8</div>
<div class="t" style="right:499.50px;top:284.86px;font-size:10.2px;color:#2a2210">88.3</div>
<div class="t" style="right:461.10px;top:284.86px;font-size:10.2px;color:#2a2210">92.4</div>
<div class="t" style="right:422.70px;top:284.86px;font-size:10.2px;color:#2a2210">96.4</div>
<div class="t" style="right:384.30px;top:284.86px;font-size:10.2px;color:#2a2210">100.4</div>
<div class="t" style="right:345.90px;top:284.86px;font-size:10.2px;color:#2a2210">104.5</div>
<div class="t" style="right:921.90px;top:298.42px;font-size:10.2px;color:#2a2210">59.6</div>
<div class="t" style="right:883.50px;top:298.42px;font-size:10.2px;color:#2a2210">60.9</div>
<div class="t" style="right:845.10px;top:298.42px;font-size:10.2px;color:#2a2210">63.0</div>
<div class="t" style="right:806.70px;top:298.42px;font-size:10.2px;color:#2a2210">66.2</div>
<div class="t" style="right:768.30px;top:298.42px;font-size:10.2px;color:#2a2210">69.5</div>
<div class="a" style="left:513.70px;top:296.32px;width:38.40px;height:13.56px;background:#000080"></div>
<div class="t" style="right:730.40px;top:298.42px;font-size:10.2px;font-weight:bold;color:#fff">72.7</div>
<div class="t" style="right:691.50px;top:298.42px;font-size:10.2px;color:#2a2210">75.1</div>
<div class="t" style="right:653.10px;top:298.42px;font-size:10.2px;color:#2a2210">77.5</div>
<div class="t" style="right:614.70px;top:298.42px;font-size:10.2px;color:#2a2210">79.9</div>
<div class="t" style="right:576.30px;top:298.42px;font-size:10.2px;color:#2a2210">82.3</div>
<div class="t" style="right:537.90px;top:298.42px;font-size:10.2px;color:#2a2210">84.7</div>
<div class="t" style="right:499.50px;top:298.42px;font-size:10.2px;color:#2a2210">86.2</div>
<div class="t" style="right:461.10px;top:298.42px;font-size:10.2px;color:#2a2210">90.2</div>
<div class="t" style="right:422.70px;top:298.42px;font-size:10.2px;color:#2a2210">94.2</div>
<div class="t" style="right:384.30px;top:298.42px;font-size:10.2px;color:#2a2210">98.1</div>
<div class="t" style="right:345.90px;top:298.42px;font-size:10.2px;color:#2a2210">102.1</div>
<div class="t" style="right:921.90px;top:311.98px;font-size:10.2px;color:#2a2210">58.3</div>
<div class="t" style="right:883.50px;top:311.98px;font-size:10.2px;color:#2a2210">60.0</div>
<div class="t" style="right:845.10px;top:311.98px;font-size:10.2px;color:#2a2210">62.1</div>
<div class="t" style="right:806.70px;top:311.98px;font-size:10.2px;color:#2a2210">65.2</div>
<div class="t" style="right:768.30px;top:311.98px;font-size:10.2px;color:#2a2210">68.2</div>
<div class="t" style="right:729.90px;top:311.98px;font-size:10.2px;color:#2a2210">71.3</div>
<div class="t" style="right:691.50px;top:311.98px;font-size:10.2px;color:#2a2210">75.1</div>
<div class="t" style="right:653.10px;top:311.98px;font-size:10.2px;color:#2a2210">77.0</div>
<div class="t" style="right:614.70px;top:311.98px;font-size:10.2px;color:#2a2210">79.2</div>
<div class="t" style="right:576.30px;top:311.98px;font-size:10.2px;color:#2a2210">82.3</div>
<div class="t" style="right:537.90px;top:311.98px;font-size:10.2px;color:#2a2210">84.7</div>
<div class="t" style="right:499.50px;top:311.98px;font-size:10.2px;color:#2a2210">86.2</div>
<div class="t" style="right:461.10px;top:311.98px;font-size:10.2px;color:#2a2210">90.2</div>
<div class="t" style="right:422.70px;top:311.98px;font-size:10.2px;color:#2a2210">94.2</div>
<div class="t" style="right:384.30px;top:311.98px;font-size:10.2px;color:#2a2210">98.1</div>
<div class="t" style="right:345.90px;top:311.98px;font-size:10.2px;color:#2a2210">102.1</div>
<div class="t" style="right:921.90px;top:325.54px;font-size:10.2px;color:#2a2210">57.1</div>
<div class="t" style="right:883.50px;top:325.54px;font-size:10.2px;color:#2a2210">59.1</div>
<div class="t" style="right:845.10px;top:325.54px;font-size:10.2px;color:#2a2210">61.2</div>
<div class="t" style="right:806.70px;top:325.54px;font-size:10.2px;color:#2a2210">62.8</div>
<div class="t" style="right:768.30px;top:325.54px;font-size:10.2px;color:#2a2210">64.4</div>
<div class="t" style="right:729.90px;top:325.54px;font-size:10.2px;color:#2a2210">66.0</div>
<div class="t" style="right:691.50px;top:325.54px;font-size:10.2px;color:#2a2210">69.6</div>
<div class="t" style="right:653.10px;top:325.54px;font-size:10.2px;color:#2a2210">73.2</div>
<div class="t" style="right:614.70px;top:325.54px;font-size:10.2px;color:#2a2210">76.8</div>
<div class="t" style="right:576.30px;top:325.54px;font-size:10.2px;color:#2a2210">80.7</div>
<div class="t" style="right:537.90px;top:325.54px;font-size:10.2px;color:#2a2210">83.6</div>
<div class="t" style="right:499.50px;top:325.54px;font-size:10.2px;color:#2a2210">85.1</div>
<div class="t" style="right:461.10px;top:325.54px;font-size:10.2px;color:#2a2210">89.0</div>
<div class="t" style="right:422.70px;top:325.54px;font-size:10.2px;color:#2a2210">93.0</div>
<div class="t" style="right:384.30px;top:325.54px;font-size:10.2px;color:#2a2210">96.9</div>
<div class="t" style="right:345.90px;top:325.54px;font-size:10.2px;color:#2a2210">100.8</div>
<div class="t" style="right:921.90px;top:339.10px;font-size:10.2px;color:#2a2210">56.6</div>
<div class="t" style="right:883.50px;top:339.10px;font-size:10.2px;color:#2a2210">58.3</div>
<div class="t" style="right:845.10px;top:339.10px;font-size:10.2px;color:#2a2210">60.4</div>
<div class="t" style="right:806.70px;top:339.10px;font-size:10.2px;color:#2a2210">61.6</div>
<div class="t" style="right:768.30px;top:339.10px;font-size:10.2px;color:#2a2210">62.8</div>
<div class="t" style="right:729.90px;top:339.10px;font-size:10.2px;color:#2a2210">64.0</div>
<div class="t" style="right:691.50px;top:339.10px;font-size:10.2px;color:#2a2210">67.3</div>
<div class="t" style="right:653.10px;top:339.10px;font-size:10.2px;color:#2a2210">70.6</div>
<div class="t" style="right:614.70px;top:339.10px;font-size:10.2px;color:#2a2210">72.9</div>
<div class="t" style="right:576.30px;top:339.10px;font-size:10.2px;color:#2a2210">75.8</div>
<div class="t" style="right:537.90px;top:339.10px;font-size:10.2px;color:#2a2210">81.6</div>
<div class="t" style="right:499.50px;top:339.10px;font-size:10.2px;color:#2a2210">83.1</div>
<div class="t" style="right:461.10px;top:339.10px;font-size:10.2px;color:#2a2210">87.0</div>
<div class="t" style="right:422.70px;top:339.10px;font-size:10.2px;color:#2a2210">90.8</div>
<div class="t" style="right:384.30px;top:339.10px;font-size:10.2px;color:#2a2210">94.6</div>
<div class="t" style="right:345.90px;top:339.10px;font-size:10.2px;color:#2a2210">98.5</div>
<div class="t" style="right:921.90px;top:352.66px;font-size:10.2px;color:#2a2210">56.2</div>
<div class="t" style="right:883.50px;top:352.66px;font-size:10.2px;color:#2a2210">57.5</div>
<div class="t" style="right:845.10px;top:352.66px;font-size:10.2px;color:#2a2210">59.6</div>
<div class="t" style="right:806.70px;top:352.66px;font-size:10.2px;color:#2a2210">60.4</div>
<div class="t" style="right:768.30px;top:352.66px;font-size:10.2px;color:#2a2210">61.1</div>
<div class="t" style="right:729.90px;top:352.66px;font-size:10.2px;color:#2a2210">61.9</div>
<div class="t" style="right:691.50px;top:352.66px;font-size:10.2px;color:#2a2210">65.6</div>
<div class="t" style="right:653.10px;top:352.66px;font-size:10.2px;color:#2a2210">68.4</div>
<div class="t" style="right:614.70px;top:352.66px;font-size:10.2px;color:#2a2210">71.1</div>
<div class="t" style="right:576.30px;top:352.66px;font-size:10.2px;color:#2a2210">74.8</div>
<div class="t" style="right:537.90px;top:352.66px;font-size:10.2px;color:#2a2210">78.5</div>
<div class="t" style="right:499.50px;top:352.66px;font-size:10.2px;color:#2a2210">80.0</div>
<div class="t" style="right:461.10px;top:352.66px;font-size:10.2px;color:#2a2210">83.7</div>
<div class="t" style="right:422.70px;top:352.66px;font-size:10.2px;color:#2a2210">87.4</div>
<div class="t" style="right:384.30px;top:352.66px;font-size:10.2px;color:#2a2210">91.2</div>
<div class="t" style="right:345.90px;top:352.66px;font-size:10.2px;color:#2a2210">94.9</div>
<div class="t" style="right:921.90px;top:366.22px;font-size:10.2px;color:#2a2210">56.0</div>
<div class="t" style="right:883.50px;top:366.22px;font-size:10.2px;color:#2a2210">57.1</div>
<div class="t" style="right:845.10px;top:366.22px;font-size:10.2px;color:#2a2210">59.2</div>
<div class="t" style="right:806.70px;top:366.22px;font-size:10.2px;color:#2a2210">59.8</div>
<div class="t" style="right:768.30px;top:366.22px;font-size:10.2px;color:#2a2210">60.7</div>
<div class="t" style="right:729.90px;top:366.22px;font-size:10.2px;color:#2a2210">61.6</div>
<div class="t" style="right:691.50px;top:366.22px;font-size:10.2px;color:#2a2210">63.5</div>
<div class="t" style="right:653.10px;top:366.22px;font-size:10.2px;color:#2a2210">66.5</div>
<div class="t" style="right:614.70px;top:366.22px;font-size:10.2px;color:#2a2210">69.4</div>
<div class="t" style="right:576.30px;top:366.22px;font-size:10.2px;color:#2a2210">71.3</div>
<div class="t" style="right:537.90px;top:366.22px;font-size:10.2px;color:#2a2210">77.3</div>
<div class="t" style="right:499.50px;top:366.22px;font-size:10.2px;color:#2a2210">78.8</div>
<div class="t" style="right:461.10px;top:366.22px;font-size:10.2px;color:#2a2210">82.5</div>
<div class="t" style="right:422.70px;top:366.22px;font-size:10.2px;color:#2a2210">86.2</div>
<div class="t" style="right:384.30px;top:366.22px;font-size:10.2px;color:#2a2210">89.9</div>
<div class="t" style="right:345.90px;top:366.22px;font-size:10.2px;color:#2a2210">93.6</div>
<div class="t" style="right:921.90px;top:379.78px;font-size:10.2px;color:#2a2210">55.9</div>
<div class="t" style="right:883.50px;top:379.78px;font-size:10.2px;color:#2a2210">56.7</div>
<div class="t" style="right:845.10px;top:379.78px;font-size:10.2px;color:#2a2210">58.8</div>
<div class="t" style="right:806.70px;top:379.78px;font-size:10.2px;color:#2a2210">59.2</div>
<div class="t" style="right:768.30px;top:379.78px;font-size:10.2px;color:#2a2210">59.6</div>
<div class="t" style="right:729.90px;top:379.78px;font-size:10.2px;color:#2a2210">60.0</div>
<div class="t" style="right:691.50px;top:379.78px;font-size:10.2px;color:#2a2210">62.4</div>
<div class="t" style="right:653.10px;top:379.78px;font-size:10.2px;color:#2a2210">64.7</div>
<div class="t" style="right:614.70px;top:379.78px;font-size:10.2px;color:#2a2210">67.2</div>
<div class="t" style="right:576.30px;top:379.78px;font-size:10.2px;color:#2a2210">69.6</div>
<div class="t" style="right:537.90px;top:379.78px;font-size:10.2px;color:#2a2210">76.1</div>
<div class="t" style="right:499.50px;top:379.78px;font-size:10.2px;color:#2a2210">77.6</div>
<div class="t" style="right:461.10px;top:379.78px;font-size:10.2px;color:#2a2210">81.2</div>
<div class="t" style="right:422.70px;top:379.78px;font-size:10.2px;color:#2a2210">84.9</div>
<div class="t" style="right:384.30px;top:379.78px;font-size:10.2px;color:#2a2210">88.6</div>
<div class="t" style="right:345.90px;top:379.78px;font-size:10.2px;color:#2a2210">92.2</div>
<div class="t" style="right:921.90px;top:393.34px;font-size:10.2px;color:#2a2210">55.5</div>
<div class="t" style="right:883.50px;top:393.34px;font-size:10.2px;color:#2a2210">56.4</div>
<div class="t" style="right:845.10px;top:393.34px;font-size:10.2px;color:#2a2210">57.8</div>
<div class="t" style="right:806.70px;top:393.34px;font-size:10.2px;color:#2a2210">58.0</div>
<div class="t" style="right:768.30px;top:393.34px;font-size:10.2px;color:#2a2210">59.1</div>
<div class="t" style="right:729.90px;top:393.34px;font-size:10.2px;color:#2a2210">60.1</div>
<div class="t" style="right:691.50px;top:393.34px;font-size:10.2px;color:#2a2210">61.2</div>
<div class="t" style="right:653.10px;top:393.34px;font-size:10.2px;color:#2a2210">63.5</div>
<div class="t" style="right:614.70px;top:393.34px;font-size:10.2px;color:#2a2210">65.7</div>
<div class="t" style="right:576.30px;top:393.34px;font-size:10.2px;color:#2a2210">68.7</div>
<div class="t" style="right:537.90px;top:393.34px;font-size:10.2px;color:#2a2210">75.6</div>
<div class="t" style="right:499.50px;top:393.34px;font-size:10.2px;color:#2a2210">77.1</div>
<div class="t" style="right:461.10px;top:393.34px;font-size:10.2px;color:#2a2210">80.7</div>
<div class="t" style="right:422.70px;top:393.34px;font-size:10.2px;color:#2a2210">84.4</div>
<div class="t" style="right:384.30px;top:393.34px;font-size:10.2px;color:#2a2210">88.0</div>
<div class="t" style="right:345.90px;top:393.34px;font-size:10.2px;color:#2a2210">91.6</div>
<div class="t" style="right:921.90px;top:406.90px;font-size:10.2px;color:#2a2210">57.0</div>
<div class="t" style="right:883.50px;top:406.90px;font-size:10.2px;color:#2a2210">56.6</div>
<div class="t" style="right:845.10px;top:406.90px;font-size:10.2px;color:#2a2210">57.4</div>
<div class="t" style="right:806.70px;top:406.90px;font-size:10.2px;color:#2a2210">57.8</div>
<div class="t" style="right:768.30px;top:406.90px;font-size:10.2px;color:#2a2210">58.7</div>
<div class="t" style="right:729.90px;top:406.90px;font-size:10.2px;color:#2a2210">59.1</div>
<div class="t" style="right:691.50px;top:406.90px;font-size:10.2px;color:#2a2210">60.0</div>
<div class="t" style="right:653.10px;top:406.90px;font-size:10.2px;color:#2a2210">62.0</div>
<div class="t" style="right:614.70px;top:406.90px;font-size:10.2px;color:#2a2210">64.0</div>
<div class="t" style="right:576.30px;top:406.90px;font-size:10.2px;color:#2a2210">67.6</div>
<div class="t" style="right:537.90px;top:406.90px;font-size:10.2px;color:#2a2210">73.1</div>
<div class="t" style="right:499.50px;top:406.90px;font-size:10.2px;color:#2a2210">74.6</div>
<div class="t" style="right:461.10px;top:406.90px;font-size:10.2px;color:#2a2210">78.1</div>
<div class="t" style="right:422.70px;top:406.90px;font-size:10.2px;color:#2a2210">81.6</div>
<div class="t" style="right:384.30px;top:406.90px;font-size:10.2px;color:#2a2210">85.2</div>
<div class="t" style="right:345.90px;top:406.90px;font-size:10.2px;color:#2a2210">88.7</div>
<div class="t" style="right:921.90px;top:420.46px;font-size:10.2px;color:#2a2210">56.8</div>
<div class="t" style="right:883.50px;top:420.46px;font-size:10.2px;color:#2a2210">56.0</div>
<div class="t" style="right:845.10px;top:420.46px;font-size:10.2px;color:#2a2210">56.4</div>
<div class="t" style="right:806.70px;top:420.46px;font-size:10.2px;color:#2a2210">56.9</div>
<div class="t" style="right:768.30px;top:420.46px;font-size:10.2px;color:#2a2210">58.2</div>
<div class="t" style="right:729.90px;top:420.46px;font-size:10.2px;color:#2a2210">58.9</div>
<div class="t" style="right:691.50px;top:420.46px;font-size:10.2px;color:#2a2210">60.2</div>
<div class="t" style="right:653.10px;top:420.46px;font-size:10.2px;color:#2a2210">62.5</div>
<div class="t" style="right:614.70px;top:420.46px;font-size:10.2px;color:#2a2210">64.8</div>
<div class="t" style="right:576.30px;top:420.46px;font-size:10.2px;color:#2a2210">66.2</div>
<div class="t" style="right:537.90px;top:420.46px;font-size:10.2px;color:#2a2210">71.6</div>
<div class="t" style="right:499.50px;top:420.46px;font-size:10.2px;color:#2a2210">73.1</div>
<div class="t" style="right:461.10px;top:420.46px;font-size:10.2px;color:#2a2210">76.6</div>
<div class="t" style="right:422.70px;top:420.46px;font-size:10.2px;color:#2a2210">80.0</div>
<div class="t" style="right:384.30px;top:420.46px;font-size:10.2px;color:#2a2210">83.5</div>
<div class="t" style="right:345.90px;top:420.46px;font-size:10.2px;color:#2a2210">87.0</div>
<div class="t" style="right:921.90px;top:434.02px;font-size:10.2px;color:#2a2210">56.5</div>
<div class="t" style="right:883.50px;top:434.02px;font-size:10.2px;color:#2a2210">55.6</div>
<div class="t" style="right:845.10px;top:434.02px;font-size:10.2px;color:#2a2210">55.9</div>
<div class="t" style="right:806.70px;top:434.02px;font-size:10.2px;color:#2a2210">56.1</div>
<div class="t" style="right:768.30px;top:434.02px;font-size:10.2px;color:#2a2210">57.3</div>
<div class="t" style="right:729.90px;top:434.02px;font-size:10.2px;color:#2a2210">57.9</div>
<div class="t" style="right:691.50px;top:434.02px;font-size:10.2px;color:#2a2210">59.1</div>
<div class="t" style="right:653.10px;top:434.02px;font-size:10.2px;color:#2a2210">60.3</div>
<div class="t" style="right:614.70px;top:434.02px;font-size:10.2px;color:#2a2210">63.6</div>
<div class="t" style="right:576.30px;top:434.02px;font-size:10.2px;color:#2a2210">65.8</div>
<div class="t" style="right:537.90px;top:434.02px;font-size:10.2px;color:#2a2210">70.1</div>
<div class="t" style="right:499.50px;top:434.02px;font-size:10.2px;color:#2a2210">71.6</div>
<div class="t" style="right:461.10px;top:434.02px;font-size:10.2px;color:#2a2210">75.0</div>
<div class="t" style="right:422.70px;top:434.02px;font-size:10.2px;color:#2a2210">78.4</div>
<div class="t" style="right:384.30px;top:434.02px;font-size:10.2px;color:#2a2210">81.9</div>
<div class="t" style="right:345.90px;top:434.02px;font-size:10.2px;color:#2a2210">85.3</div>
<div class="t" style="right:921.90px;top:447.58px;font-size:10.2px;color:#2a2210">56.5</div>
<div class="t" style="right:883.50px;top:447.58px;font-size:10.2px;color:#2a2210">55.4</div>
<div class="t" style="right:845.10px;top:447.58px;font-size:10.2px;color:#2a2210">55.4</div>
<div class="t" style="right:806.70px;top:447.58px;font-size:10.2px;color:#2a2210">55.6</div>
<div class="t" style="right:768.30px;top:447.58px;font-size:10.2px;color:#2a2210">56.6</div>
<div class="t" style="right:729.90px;top:447.58px;font-size:10.2px;color:#2a2210">57.0</div>
<div class="t" style="right:691.50px;top:447.58px;font-size:10.2px;color:#2a2210">58.0</div>
<div class="t" style="right:653.10px;top:447.58px;font-size:10.2px;color:#2a2210">59.0</div>
<div class="t" style="right:614.70px;top:447.58px;font-size:10.2px;color:#2a2210">62.6</div>
<div class="t" style="right:576.30px;top:447.58px;font-size:10.2px;color:#2a2210">66.1</div>
<div class="t" style="right:537.90px;top:447.58px;font-size:10.2px;color:#2a2210">69.7</div>
<div class="t" style="right:499.50px;top:447.58px;font-size:10.2px;color:#2a2210">71.2</div>
<div class="t" style="right:461.10px;top:447.58px;font-size:10.2px;color:#2a2210">74.6</div>
<div class="t" style="right:422.70px;top:447.58px;font-size:10.2px;color:#2a2210">78.0</div>
<div class="t" style="right:384.30px;top:447.58px;font-size:10.2px;color:#2a2210">81.4</div>
<div class="t" style="right:345.90px;top:447.58px;font-size:10.2px;color:#2a2210">84.8</div>
<div class="t" style="right:921.90px;top:461.14px;font-size:10.2px;color:#2a2210">55.5</div>
<div class="t" style="right:883.50px;top:461.14px;font-size:10.2px;color:#2a2210">54.4</div>
<div class="t" style="right:845.10px;top:461.14px;font-size:10.2px;color:#2a2210">54.6</div>
<div class="t" style="right:806.70px;top:461.14px;font-size:10.2px;color:#2a2210">54.7</div>
<div class="t" style="right:768.30px;top:461.14px;font-size:10.2px;color:#2a2210">55.9</div>
<div class="t" style="right:729.90px;top:461.14px;font-size:10.2px;color:#2a2210">56.4</div>
<div class="t" style="right:691.50px;top:461.14px;font-size:10.2px;color:#2a2210">57.6</div>
<div class="t" style="right:653.10px;top:461.14px;font-size:10.2px;color:#2a2210">58.8</div>
<div class="t" style="right:614.70px;top:461.14px;font-size:10.2px;color:#2a2210">61.9</div>
<div class="t" style="right:576.30px;top:461.14px;font-size:10.2px;color:#2a2210">65.1</div>
<div class="t" style="right:537.90px;top:461.14px;font-size:10.2px;color:#2a2210">68.2</div>
<div class="t" style="right:499.50px;top:461.14px;font-size:10.2px;color:#2a2210">69.7</div>
<div class="t" style="right:461.10px;top:461.14px;font-size:10.2px;color:#2a2210">73.0</div>
<div class="t" style="right:422.70px;top:461.14px;font-size:10.2px;color:#2a2210">76.4</div>
<div class="t" style="right:384.30px;top:461.14px;font-size:10.2px;color:#2a2210">79.8</div>
<div class="t" style="right:345.90px;top:461.14px;font-size:10.2px;color:#2a2210">83.1</div>
<div class="a" style="left:321.20px;top:472.60px;width:1px;height:49.40px;background:#f6f6f6"></div>
<div class="a" style="left:359.60px;top:472.60px;width:1px;height:49.40px;background:#f6f6f6"></div>
<div class="a" style="left:398.00px;top:472.60px;width:1px;height:49.40px;background:#f6f6f6"></div>
<div class="a" style="left:436.40px;top:472.60px;width:1px;height:49.40px;background:#f6f6f6"></div>
<div class="a" style="left:474.80px;top:472.60px;width:1px;height:49.40px;background:#f6f6f6"></div>
<div class="a" style="left:513.20px;top:472.60px;width:1px;height:49.40px;background:#f6f6f6"></div>
<div class="a" style="left:551.60px;top:472.60px;width:1px;height:49.40px;background:#f6f6f6"></div>
<div class="a" style="left:590.00px;top:472.60px;width:1px;height:49.40px;background:#f6f6f6"></div>
<div class="a" style="left:628.40px;top:472.60px;width:1px;height:49.40px;background:#f6f6f6"></div>
<div class="a" style="left:666.80px;top:472.60px;width:1px;height:49.40px;background:#f6f6f6"></div>
<div class="a" style="left:705.20px;top:472.60px;width:1px;height:49.40px;background:#f6f6f6"></div>
<div class="a" style="left:743.60px;top:472.60px;width:1px;height:49.40px;background:#f6f6f6"></div>
<div class="a" style="left:782.00px;top:472.60px;width:1px;height:49.40px;background:#f6f6f6"></div>
<div class="a" style="left:820.40px;top:472.60px;width:1px;height:49.40px;background:#f6f6f6"></div>
<div class="a" style="left:858.80px;top:472.60px;width:1px;height:49.40px;background:#f6f6f6"></div>
<div class="a" style="left:897.20px;top:472.60px;width:1px;height:49.40px;background:#f6f6f6"></div>
<div class="a" style="left:935.60px;top:472.60px;width:1px;height:49.40px;background:#f6f6f6"></div>
<div class="a" style="left:321.70px;top:486.16px;width:622.30px;height:1px;background:#f8f8f8"></div>
<div class="a" style="left:321.70px;top:499.72px;width:622.30px;height:1px;background:#f8f8f8"></div>
<div class="a" style="left:321.70px;top:513.28px;width:622.30px;height:1px;background:#f8f8f8"></div>
<div class="a" style="left:280px;top:522px;width:670px;height:1px;background:#d0d0d0"></div>
<svg class="a" style="left:720px;top:200px" width="10" height="6"><path d="M1 0.5H9L5 5Z" fill="#1a5cc8"></path></svg>
<svg class="a" style="left:321px;top:413px" width="5" height="8"><path d="M0.7 0.5A3.5 3.5 0 0 1 0.7 7.5Z" fill="#1a5cc8"></path></svg>
<svg class="a" style="left:719px;top:412px" width="11" height="11"><circle cx="5.5" cy="5.5" r="3.8" fill="#d8e8c0" stroke="#1a4a9a" stroke-width="1.6"></circle></svg>
<svg class="a" style="left:511px;top:284px" width="11" height="16"><path d="M1 1V13L4 10.2L6.3 15L8 14.2L5.8 9.6H9.8Z" fill="#fff" stroke="#444" stroke-width="0.7"></path></svg>

<div class="a" style="left:949px;top:207px;width:167px;height:166px;background:#f0f0f0;border:1px solid #a8a8a8;border-top:none"></div>
<div class="a" style="left:957px;top:215px;width:1px;height:15px;border-left:1px dotted #a8a8a8"></div>
<div class="t" style="left: 964px; top: 217px; font-size: 11.5px; color: rgb(51, 51, 51); display: inline-block; white-space: nowrap; transform: scaleX(0.9672); transform-origin: left center;">Channels</div>
<div class="a" style="left:949px;top:373px;width:167px;height:1px;background:#a8a8a8"></div>
<div class="a" style="left:949px;top:374px;width:167px;height:148px;background:#f0f0f0;border:1px solid #a8a8a8;border-top:none"></div>
<div class="a" style="left:957px;top:382px;width:1px;height:15px;border-left:1px dotted #a8a8a8"></div>
<div class="t" style="left: 964px; top: 384px; font-size: 11.5px; color: rgb(51, 51, 51); display: inline-block; white-space: nowrap; transform: scaleX(0.9612); transform-origin: left center;">Crank/Cam Sensor</div>
<div class="a" style="left:949px;top:521px;width:167px;height:1px;background:#c8c8c8"></div>
<div class="a" style="left:955px;top:232px;width:156px;height:131.2px;background:#fff;border:1px solid #c0c0c0"></div>
<div class="a" style="left:956px;top:233.00px;width:89px;height:16.15px;background:#050505;border-bottom:1px solid #6a6a6a"></div>
<div class="a" style="left:1045px;top:233.00px;width:65px;height:16.15px;background:#e2e2e2;border-bottom:1px solid #f6f6f6"></div>
<div class="t" style="left:959px;top:236.00px;font-size:10.5px;font-weight:bold;color:#2e2016;transform:scaleX(0.86);transform-origin:left center">Idle Out</div>
<div class="t" style="left:1049.5px;top:236.20px;font-size:10.5px;font-weight:bold;color:#c4c4c4;transform:scaleX(0.88);transform-origin:left center">0.0</div>
<div class="t" style="left:1082px;top:236.20px;font-size:10.5px;font-weight:bold;color:#c4c4c4">%</div>
<div class="a" style="left:956px;top:249.15px;width:89px;height:16.15px;background:#050505;border-bottom:1px solid #6a6a6a"></div>
<div class="a" style="left:1045px;top:249.15px;width:65px;height:16.15px;background:#e2e2e2;border-bottom:1px solid #f6f6f6"></div>
<svg class="a" style="left:1041px;top:252.15px" width="4" height="10"><path d="M4 0C1.5 2 0.5 3.5 0.5 5S1.5 8 4 10Z" fill="#e81010"></path></svg>
<div class="t" style="left:959px;top:252.15px;font-size:10.5px;font-weight:bold;color:#d98a4a;transform:scaleX(0.86);transform-origin:left center">BoostOut</div>
<div class="t" style="left:1049.5px;top:252.35px;font-size:10.5px;font-weight:bold;color:#222;transform:scaleX(0.88);transform-origin:left center">0.0</div>
<div class="t" style="left:1082px;top:252.35px;font-size:10.5px;font-weight:bold;color:#222">%</div>
<div class="a" style="left:956px;top:265.30px;width:89px;height:16.15px;background:#050505;border-bottom:1px solid #6a6a6a"></div>
<div class="a" style="left:1045px;top:265.30px;width:65px;height:16.15px;background:#e2e2e2;border-bottom:1px solid #f6f6f6"></div>
<div class="t" style="left:959px;top:268.30px;font-size:10.5px;font-weight:bold;color:#2e2016;transform:scaleX(0.86);transform-origin:left center">O2B1 Out</div>
<div class="t" style="left:1049.5px;top:268.50px;font-size:10.5px;font-weight:bold;color:#c4c4c4;transform:scaleX(0.88);transform-origin:left center">0.0</div>
<div class="t" style="left:1082px;top:268.50px;font-size:10.5px;font-weight:bold;color:#c4c4c4">%</div>
<div class="a" style="left:956px;top:281.45px;width:89px;height:16.15px;background:#050505;border-bottom:1px solid #6a6a6a"></div>
<div class="a" style="left:1045px;top:281.45px;width:65px;height:16.15px;background:#e2e2e2;border-bottom:1px solid #f6f6f6"></div>
<svg class="a" style="left:1041px;top:284.45px" width="4" height="10"><path d="M4 0C1.5 2 0.5 3.5 0.5 5S1.5 8 4 10Z" fill="#e81010"></path></svg>
<div class="t" style="left:959px;top:284.45px;font-size:10.5px;font-weight:bold;color:#d98a4a;transform:scaleX(0.86);transform-origin:left center">InCam Targ</div>
<div class="t" style="left:1049.5px;top:284.65px;font-size:10.5px;font-weight:bold;color:#222;transform:scaleX(0.88);transform-origin:left center">0.0</div>
<div class="t" style="left:1082px;top:284.65px;font-size:10.5px;font-weight:bold;color:#222">°</div>
<div class="a" style="left:956px;top:297.60px;width:89px;height:16.15px;background:#050505;border-bottom:1px solid #6a6a6a"></div>
<div class="a" style="left:1045px;top:297.60px;width:65px;height:16.15px;background:#e2e2e2;border-bottom:1px solid #f6f6f6"></div>
<svg class="a" style="left:1041px;top:300.60px" width="4" height="10"><path d="M4 0C1.5 2 0.5 3.5 0.5 5S1.5 8 4 10Z" fill="#e81010"></path></svg>
<div class="t" style="left:959px;top:300.60px;font-size:10.5px;font-weight:bold;color:#d98a4a;transform:scaleX(0.86);transform-origin:left center">InCam1Ang</div>
<div class="t" style="left:1049.5px;top:300.80px;font-size:10.5px;font-weight:bold;color:#222;transform:scaleX(0.88);transform-origin:left center">Calibrating</div>
<div class="a" style="left:956px;top:313.75px;width:89px;height:16.15px;background:#050505;border-bottom:1px solid #6a6a6a"></div>
<div class="a" style="left:1045px;top:313.75px;width:65px;height:16.15px;background:#e2e2e2;border-bottom:1px solid #f6f6f6"></div>
<div class="t" style="left:959px;top:316.75px;font-size:10.5px;font-weight:bold;color:#2e2016;transform:scaleX(0.86);transform-origin:left center">ExCam Targ</div>
<div class="t" style="left:1049.5px;top:316.95px;font-size:10.5px;font-weight:bold;color:#c4c4c4;transform:scaleX(0.88);transform-origin:left center">0.0</div>
<div class="t" style="left:1082px;top:316.95px;font-size:10.5px;font-weight:bold;color:#c4c4c4">°</div>
<div class="a" style="left:956px;top:329.90px;width:89px;height:16.15px;background:#050505;border-bottom:1px solid #6a6a6a"></div>
<div class="a" style="left:1045px;top:329.90px;width:65px;height:16.15px;background:#e2e2e2;border-bottom:1px solid #f6f6f6"></div>
<div class="t" style="left:959px;top:332.90px;font-size:10.5px;font-weight:bold;color:#2e2016;transform:scaleX(0.86);transform-origin:left center">ExCam1Ang</div>
<div class="t" style="left:1049.5px;top:333.10px;font-size:10.5px;font-weight:bold;color:#c4c4c4;transform:scaleX(0.88);transform-origin:left center">0.0</div>
<div class="t" style="left:1082px;top:333.10px;font-size:10.5px;font-weight:bold;color:#c4c4c4">°</div>
<div class="a" style="left:956px;top:346.05px;width:89px;height:16.15px;background:#050505;border-bottom:1px solid #6a6a6a"></div>
<div class="a" style="left:1045px;top:346.05px;width:65px;height:16.15px;background:#e2e2e2;border-bottom:1px solid #f6f6f6"></div>
<svg class="a" style="left:1041px;top:349.05px" width="4" height="10"><path d="M4 0C1.5 2 0.5 3.5 0.5 5S1.5 8 4 10Z" fill="#e81010"></path></svg>
<div class="t" style="left:959px;top:349.05px;font-size:10.5px;font-weight:bold;color:#d98a4a;transform:scaleX(0.86);transform-origin:left center">INJ1 Duty</div>
<div class="t" style="left:1049.5px;top:349.25px;font-size:10.5px;font-weight:bold;color:#222;transform:scaleX(0.88);transform-origin:left center">0.0</div>
<div class="t" style="left:1082px;top:349.25px;font-size:10.5px;font-weight:bold;color:#222">%</div>
<div class="a" style="left:955px;top:398px;width:156px;height:115.0px;background:#fff;border:1px solid #c0c0c0"></div>
<div class="a" style="left:956px;top:399.00px;width:89px;height:16.15px;background:#050505;border-bottom:1px solid #6a6a6a"></div>
<div class="a" style="left:1045px;top:399.00px;width:65px;height:16.15px;background:#e2e2e2;border-bottom:1px solid #f6f6f6"></div>
<svg class="a" style="left:1041px;top:402.00px" width="4" height="10"><path d="M4 0C1.5 2 0.5 3.5 0.5 5S1.5 8 4 10Z" fill="#e81010"></path></svg>
<div class="t" style="left:959px;top:402.00px;font-size:10.5px;font-weight:bold;color:#d98a4a;transform:scaleX(0.86);transform-origin:left center">Trig SyncState</div>
<div class="t" style="left:1049.5px;top:402.20px;font-size:10.5px;font-weight:bold;color:#222;transform:scaleX(0.88);transform-origin:left center">Running</div>
<div class="a" style="left:956px;top:415.15px;width:89px;height:16.15px;background:#050505;border-bottom:1px solid #6a6a6a"></div>
<div class="a" style="left:1045px;top:415.15px;width:65px;height:16.15px;background:#e2e2e2;border-bottom:1px solid #f6f6f6"></div>
<svg class="a" style="left:1041px;top:418.15px" width="4" height="10"><path d="M4 0C1.5 2 0.5 3.5 0.5 5S1.5 8 4 10Z" fill="#e81010"></path></svg>
<div class="t" style="left:959px;top:418.15px;font-size:10.5px;font-weight:bold;color:#d98a4a;transform:scaleX(0.86);transform-origin:left center">Trig SyncLev</div>
<div class="t" style="left:1049.5px;top:418.35px;font-size:10.5px;font-weight:bold;color:#222;transform:scaleX(0.88);transform-origin:left center">Full</div>
<div class="a" style="left:956px;top:431.30px;width:89px;height:16.15px;background:#050505;border-bottom:1px solid #6a6a6a"></div>
<div class="a" style="left:1045px;top:431.30px;width:65px;height:16.15px;background:#e2e2e2;border-bottom:1px solid #f6f6f6"></div>
<svg class="a" style="left:1041px;top:434.30px" width="4" height="10"><path d="M4 0C1.5 2 0.5 3.5 0.5 5S1.5 8 4 10Z" fill="#e81010"></path></svg>
<div class="t" style="left:959px;top:434.30px;font-size:10.5px;font-weight:bold;color:#d98a4a;transform:scaleX(0.86);transform-origin:left center">Trig ErrsCnt</div>
<div class="t" style="left:1049.5px;top:434.50px;font-size:10.5px;font-weight:bold;color:#222;transform:scaleX(0.88);transform-origin:left center">0</div>
<div class="a" style="left:956px;top:447.45px;width:89px;height:16.15px;background:#050505;border-bottom:1px solid #6a6a6a"></div>
<div class="a" style="left:1045px;top:447.45px;width:65px;height:16.15px;background:#e2e2e2;border-bottom:1px solid #f6f6f6"></div>
<svg class="a" style="left:1041px;top:450.45px" width="4" height="10"><path d="M4 0C1.5 2 0.5 3.5 0.5 5S1.5 8 4 10Z" fill="#e81010"></path></svg>
<div class="t" style="left:959px;top:450.45px;font-size:10.5px;font-weight:bold;color:#d98a4a;transform:scaleX(0.86);transform-origin:left center">Trig Errs</div>
<div class="t" style="left:1049.5px;top:450.65px;font-size:10.5px;font-weight:bold;color:#222;transform:scaleX(0.88);transform-origin:left center">No Errors</div>
<div class="a" style="left:956px;top:463.60px;width:89px;height:16.15px;background:#050505;border-bottom:1px solid #6a6a6a"></div>
<div class="a" style="left:1045px;top:463.60px;width:65px;height:16.15px;background:#e2e2e2;border-bottom:1px solid #f6f6f6"></div>
<svg class="a" style="left:1041px;top:466.60px" width="4" height="10"><path d="M4 0C1.5 2 0.5 3.5 0.5 5S1.5 8 4 10Z" fill="#e81010"></path></svg>
<div class="t" style="left:959px;top:466.60px;font-size:10.5px;font-weight:bold;color:#d98a4a;transform:scaleX(0.86);transform-origin:left center">Trig TthCnt</div>
<div class="t" style="left:1049.5px;top:466.80px;font-size:10.5px;font-weight:bold;color:#222;transform:scaleX(0.88);transform-origin:left center">4</div>
<div class="a" style="left:956px;top:479.75px;width:89px;height:16.15px;background:#050505;border-bottom:1px solid #6a6a6a"></div>
<div class="a" style="left:1045px;top:479.75px;width:65px;height:16.15px;background:#e2e2e2;border-bottom:1px solid #f6f6f6"></div>
<svg class="a" style="left:1041px;top:482.75px" width="4" height="10"><path d="M4 0C1.5 2 0.5 3.5 0.5 5S1.5 8 4 10Z" fill="#e81010"></path></svg>
<div class="t" style="left:959px;top:482.75px;font-size:10.5px;font-weight:bold;color:#d98a4a;transform:scaleX(0.86);transform-origin:left center">Trig TthCnt@Err</div>
<div class="t" style="left:1049.5px;top:482.95px;font-size:10.5px;font-weight:bold;color:#222;transform:scaleX(0.88);transform-origin:left center">0</div>
<div class="a" style="left:956px;top:495.90px;width:89px;height:16.15px;background:#050505;border-bottom:1px solid #6a6a6a"></div>
<div class="a" style="left:1045px;top:495.90px;width:65px;height:16.15px;background:#e2e2e2;border-bottom:1px solid #f6f6f6"></div>
<svg class="a" style="left:1041px;top:498.90px" width="4" height="10"><path d="M4 0C1.5 2 0.5 3.5 0.5 5S1.5 8 4 10Z" fill="#e81010"></path></svg>
<div class="t" style="left:959px;top:498.90px;font-size:10.5px;font-weight:bold;color:#d98a4a;transform:scaleX(0.86);transform-origin:left center">Home TthCnt@Err</div>
<div class="t" style="left:1049.5px;top:499.10px;font-size:10.5px;font-weight:bold;color:#222;transform:scaleX(0.88);transform-origin:left center">0</div>
<div class="a" style="left:1115px;top:82px;width:82px;height:442px;background:#fff;border-left:1px solid #d8d8d8"></div>
<div class="a" style="left:1184px;top:83px;width:12px;height:440px;background:#f0f0f0"></div>
<div class="a" style="left:1184px;top:83px;width:12px;height:17px;background:#f8f8f8"></div>
<div class="a" style="left:1184px;top:101px;width:12px;height:402px;background:#c8c8c8"></div>
<svg class="a" style="left:1186px;top:88px" width="8" height="6"><path d="M1 5L4 2L7 5" fill="none" stroke="#333" stroke-width="1.4"></path></svg>
<svg class="a" style="left:1186px;top:513px" width="8" height="6"><path d="M1 1L4 4L7 1" fill="none" stroke="#333" stroke-width="1.4"></path></svg>
<div class="a" style="left:1198px;top:64px;width:18px;height:606px;background:#ececec"></div>
<div class="a" style="left:1201px;top:65px;width:15px;height:39px;background:#f4f4f4;border:1px solid #c0c0c0;border-right:none;border-radius:3px 0 0 3px"></div>
<div class="a" style="left:1201px;top:105px;width:15px;height:80px;background:#f4f4f4;border:1px solid #c0c0c0;border-right:none;border-radius:3px 0 0 3px"></div>
<div class="t" style="left:1204px;top:69px;font-size:10px;color:#333;writing-mode:vertical-rl;transform:scaleY(0.9);transform-origin:center top">Profiles</div>
<svg class="a" style="left:1204px;top:108px" width="11" height="11"><circle cx="6.5" cy="4.5" r="3.3" fill="none" stroke="#333" stroke-width="1.2"></circle><path d="M4 7L1 10" stroke="#333" stroke-width="1.4"></path></svg>
<div class="t" style="left:1204px;top:122px;font-size:10px;color:#333;writing-mode:vertical-rl;transform:scaleY(0.83);transform-origin:center top">Search Device</div>

<div class="a" style="left:203px;top:525px;width:995px;height:145px;background:#f0f0f0"></div>
<div class="a" style="left:204px;top:528px;width:996px;height:14px;background:#8aa8d0"></div>
<div class="t" style="left: 206.5px; top: 530.5px; font-size: 10.5px; color: rgb(28, 44, 76); display: inline-block; white-space: nowrap; transform: scaleX(0.8866); transform-origin: left center;">Data Manager</div>
<svg class="a" style="left:1188px;top:529px" width="9" height="13"><path d="M2.5 1H6.5V7H2.5Z M1 7H8 M4.5 7V12" fill="none" stroke="#eef2fa" stroke-width="1.2"></path></svg>
<div class="a" style="left:204px;top:543px;width:996px;height:111px;background:#f0f0f0;border-left:1px solid #fff"></div>
<div class="a" style="left:567px;top:544px;width:633px;height:109px;background:#e0e0e0;border:1px solid #a8a8a8;border-left:none"></div>
<div class="a" style="left:207px;top:547px;width:360px;height:31px;background:linear-gradient(#fff 40%,#efefef);border:1px solid #8a8a8a;border-radius:1px"></div>
<div class="a" style="left:207px;top:584px;width:360px;height:31px;background:linear-gradient(#fff 40%,#efefef);border:1px solid #8a8a8a;border-radius:1px"></div>
<div class="a" style="left:207px;top:620px;width:360px;height:32px;background:linear-gradient(#fff 40%,#efefef);border:1px solid #8a8a8a;border-radius:1px"></div>
<div class="t" style="left: 210px; top: 549px; font-size: 10px; font-weight: bold; color: rgb(34, 34, 34); display: inline-block; white-space: nowrap; transform: scaleX(0.9034); transform-origin: left center;">Elite 1500 ECU User Logging</div>
<div class="t" style="left: 340px; top: 549px; font-size: 10px; font-style: italic; color: rgb(68, 68, 68); display: inline-block; white-space: nowrap; transform: scaleX(0.8602); transform-origin: left center;">Data Available</div>
<div class="t" style="left: 516px; top: 549px; font-size: 10px; color: rgb(58, 58, 176); text-decoration: underline; display: inline-block; white-space: nowrap; transform: scaleX(0.837); transform-origin: left center;">13 Channels</div>
<div class="a" style="left:485px;top:562px;width:80px;height:14px;background:#e2e2e2;border:1px solid #c8c8c8"></div>
<svg class="a" style="left:214px;top:562.6px" width="8" height="11"><path d="M1 1L7 5.5L1 10Z" fill="#f4fff4" stroke="#3a9a3a" stroke-width="1.3"></path></svg>
<div class="t" style="left: 225px; top: 563.1px; font-size: 10.5px; color: rgb(51, 51, 51); display: inline-block; white-space: nowrap; transform: scaleX(0.8801); transform-origin: left center;">Playback</div>
<div class="t" style="left: 271.5px; top: 563.1px; font-size: 10.5px; color: rgb(51, 51, 51); display: inline-block; white-space: nowrap; transform: scaleX(0.9119); transform-origin: left center;">Options</div>
<svg class="a" style="left:309px;top:566.6px" width="5" height="3"><path d="M0 0H5L2.5 3Z" fill="#222"></path></svg>
<div class="t" style="left: 210px; top: 586px; font-size: 10px; font-weight: bold; color: rgb(34, 34, 34); display: inline-block; white-space: nowrap; transform: scaleX(0.8801); transform-origin: left center;">PC Logger</div>
<div class="t" style="left: 261px; top: 586px; font-size: 10px; font-style: italic; color: rgb(68, 68, 68); display: inline-block; white-space: nowrap; transform: scaleX(0.8467); transform-origin: left center;">Empty</div>
<div class="t" style="left: 516px; top: 586px; font-size: 10px; color: rgb(58, 58, 176); text-decoration: underline; display: inline-block; white-space: nowrap; transform: scaleX(0.837); transform-origin: left center;">70 Channels</div>
<svg class="a" style="left:214px;top:599.8px" width="8" height="11"><path d="M1 1L7 5.5L1 10Z" fill="#f4fff4" stroke="#c0c8c0" stroke-width="1.3"></path></svg>
<div class="t" style="left: 225px; top: 600.3px; font-size: 10.5px; color: rgb(176, 176, 176); display: inline-block; white-space: nowrap; transform: scaleX(0.8801); transform-origin: left center;">Playback</div>
<div class="t" style="left: 271.5px; top: 600.3px; font-size: 10.5px; color: rgb(51, 51, 51); display: inline-block; white-space: nowrap; transform: scaleX(0.9119); transform-origin: left center;">Options</div>
<svg class="a" style="left:309px;top:603.8px" width="5" height="3"><path d="M0 0H5L2.5 3Z" fill="#222"></path></svg>
<div class="a" style="left:319px;top:599px;width:1px;height:13px;background:#c8c8c8"></div>
<div class="a" style="left:325px;top:600px;width:11px;height:11px;border-radius:50%;background:radial-gradient(circle at 40% 35%,#e02020,#b00000)"></div>
<div class="a" style="left:344px;top:601px;width:10px;height:9px;background:#a8a8a8;border:1px solid #c0c0c0"></div>
<div class="t" style="left: 454px; top: 601px; font-size: 10.5px; color: rgb(51, 51, 51); display: inline-block; white-space: nowrap; transform: scaleX(0.7958); transform-origin: left center;">0&nbsp;&nbsp;(ms)</div>
<div class="a" style="left:485px;top:598px;width:80px;height:14px;background:#e2e2e2;border:1px solid #c8c8c8"></div>
<div class="t" style="left: 210px; top: 622px; font-size: 10px; font-weight: bold; color: rgb(34, 34, 34); display: inline-block; white-space: nowrap; transform: scaleX(0.9249); transform-origin: left center;">External File</div>
<svg class="a" style="left:214px;top:635.5px" width="8" height="11"><path d="M1 1L7 5.5L1 10Z" fill="#f4fff4" stroke="#3a9a3a" stroke-width="1.3"></path></svg>
<div class="t" style="left: 225px; top: 636px; font-size: 10.5px; color: rgb(51, 51, 51); display: inline-block; white-space: nowrap; transform: scaleX(0.8801); transform-origin: left center;">Playback</div>
<div class="a" style="left:204px;top:654px;width:996px;height:1px;background:#a0a0a0"></div>
<div class="a" style="left:205px;top:654px;width:66px;height:15px;background:#fff;border:1px solid #c8c8c8;border-top:none"></div>
<div class="t" style="left: 209px; top: 655px; font-size: 10.5px; color: rgb(51, 51, 51); display: inline-block; white-space: nowrap; transform: scaleX(0.8716); transform-origin: left center;">Data Manager</div>
<div class="t" style="left: 276px; top: 656.5px; font-size: 10.5px; color: rgb(136, 136, 136); display: inline-block; white-space: nowrap; transform: scaleX(0.8565); transform-origin: left center;">Devices</div>

<div class="a" style="left:64px;top:670px;width:1152px;height:18px;background:#f0f0f0;border-top:1px solid #dcdcdc"></div>
<div class="a" style="left:65px;top:672px;width:111px;height:14px;background:#1e8cf0"></div>
<div class="t" style="left: 86px; top: 674.5px; font-size: 10px; font-weight: bold; color: rgb(255, 255, 255); display: inline-block; white-space: nowrap; transform: scaleX(0.8999); transform-origin: left center;">ECU Connected</div>
<div class="a" style="left:178px;top:672px;width:93px;height:14px;background:#0aa01e"></div>
<div class="t" style="left: 1170px; top: 674.5px; font-size: 10px; font-weight: bold; color: rgb(34, 34, 34); display: inline-block; white-space: nowrap; transform: scaleX(0.8707); transform-origin: left center;">0 DTCs</div>

<div class="a" style="left:64px;top:688px;width:1152px;height:32px;background:#0c0e12"></div>
<svg class="a" style="left:76px;top:697px" width="15" height="15"><path d="M0 2L6.3 1.1V7H0ZM7 1L14.5 0V7H7ZM0 7.8H6.3V13.8L0 13ZM7 7.8H14.5V15L7 14Z" fill="#fff"></path></svg>
<div class="a" style="left:102px;top:688px;width:276px;height:32px;background:#f2f2f2"></div>
<div class="a" style="left:110px;top:696px;width:16px;height:16px;border-radius:50%;border:2px solid #111"></div>
<div class="t" style="left: 135px; top: 697.5px; font-size: 12.5px; color: rgb(68, 68, 68); display: inline-block; white-space: nowrap; transform: scaleX(0.887); transform-origin: left center;">Type here to search</div>
<svg class="a" style="left:356px;top:697px" width="10" height="15"><rect x="2.5" y="0.8" width="5" height="9" rx="2.5" fill="none" stroke="#777" stroke-width="1.2"></rect><path d="M1 7.5A4 4 0 0 0 9 7.5M5 11.5V14M3 14H7" fill="none" stroke="#777" stroke-width="1.2"></path></svg>
<svg class="a" style="left:389px;top:697px" width="15" height="14"><rect x="1" y="2" width="8" height="10" fill="none" stroke="#fff" stroke-width="1.5"></rect><path d="M0 1H10M0 13H10" stroke="#fff" stroke-width="1.3"></path><path d="M12 3V5M12 7V11" stroke="#fff" stroke-width="1.8"></path></svg>
<div class="t" style="left: 428px; top: 690px; font-size: 25px; font-weight: bold; color: rgb(30, 120, 216); display: inline-block; white-space: nowrap; transform: scaleX(1.2225); transform-origin: left center;">e</div>
<svg class="a" style="left:467px;top:697px" width="19" height="15"><path d="M0 0H7L9 2H19V15H0Z" fill="#f0c850"></path><rect x="0" y="4" width="19" height="11" fill="#f5d870"></rect><rect x="5" y="8" width="9" height="7" fill="#3aa0d8"></rect><rect x="7" y="11" width="5" height="4" fill="#f5d870"></rect></svg>
<div class="a" style="left:497px;top:688px;width:38px;height:32px;background:#3a3c40"></div>
<div class="a" style="left:497px;top:718px;width:38px;height:2px;background:#8ab4f0"></div>
<div class="a" style="left:506px;top:695px;width:17px;height:17px;border-radius:4px;background:#111"></div>
<div class="t" style="left:507px;top:697px;font-size:15px;font-weight:bold;font-style:italic;color:#f5c518">H</div>
<svg class="a" style="left:514px;top:691px" width="10" height="9"><path d="M4 0L10 0L6 4L9 4L2 9L4 5L1 5Z" fill="#f5c518"></path></svg>
<svg class="a" style="left:1017px;top:697px" width="14" height="14"><circle cx="9" cy="4" r="2.5" fill="none" stroke="#fff" stroke-width="1.2"></circle><path d="M5 13A4 4 0 0 1 13 13" fill="none" stroke="#fff" stroke-width="1.2"></path><circle cx="4.5" cy="7" r="2.2" fill="#0c0e12" stroke="#fff" stroke-width="1.2"></circle><path d="M1 14A3.5 3.5 0 0 1 8 14" fill="none" stroke="#fff" stroke-width="1.2"></path></svg>
<svg class="a" style="left:1047px;top:700px" width="12" height="7"><path d="M1 6L6 1L11 6" fill="none" stroke="#fff" stroke-width="1.3"></path></svg>
<svg class="a" style="left:1065px;top:699px" width="14" height="10"><rect x="2" y="2.5" width="11" height="6" fill="#ddd" stroke="#fff" stroke-width="1"></rect><rect x="0" y="0.5" width="4" height="4" fill="#fff"></rect><rect x="6" y="5" width="4" height="2" fill="#555"></rect></svg>
<svg class="a" style="left:1084px;top:698px" width="15" height="13"><rect x="4" y="1" width="10" height="8" fill="none" stroke="#fff" stroke-width="1.2"></rect><path d="M9 9V12M6 12H12M0.5 1V6H4" stroke="#fff" stroke-width="1.2" fill="none"></path></svg>
<svg class="a" style="left:1103px;top:698px" width="15" height="13"><path d="M1 4.5H3.5L7 1.5V11.5L3.5 8.5H1Z" fill="none" stroke="#fff" stroke-width="1.2"></path><path d="M9 4.5A2.5 2.5 0 0 1 9 8.5M10.5 3A4.5 4.5 0 0 1 10.5 10M12 1.5A6.5 6.5 0 0 1 12 11.5" fill="none" stroke="#fff" stroke-width="1.1"></path></svg>
<div class="t" style="left: 1129px; top: 692px; font-size: 11px; color: rgb(255, 255, 255); display: inline-block; white-space: nowrap; transform: scaleX(0.8299); transform-origin: left center;">2:21 PM</div>
<div class="t" style="left: 1128px; top: 706.5px; font-size: 11px; color: rgb(255, 255, 255); display: inline-block; white-space: nowrap; transform: scaleX(0.8873); transform-origin: left center;">1/4/2019</div>
<svg class="a" style="left:1183px;top:697px" width="14" height="15"><path d="M0.6 0.6H13.4V10.5H7.5L5 13.5V10.5H0.6Z" fill="none" stroke="#fff" stroke-width="1.2"></path></svg>
<div class="a" style="left:1212px;top:688px;width:1px;height:32px;background:#505050"></div>


</body></html>
